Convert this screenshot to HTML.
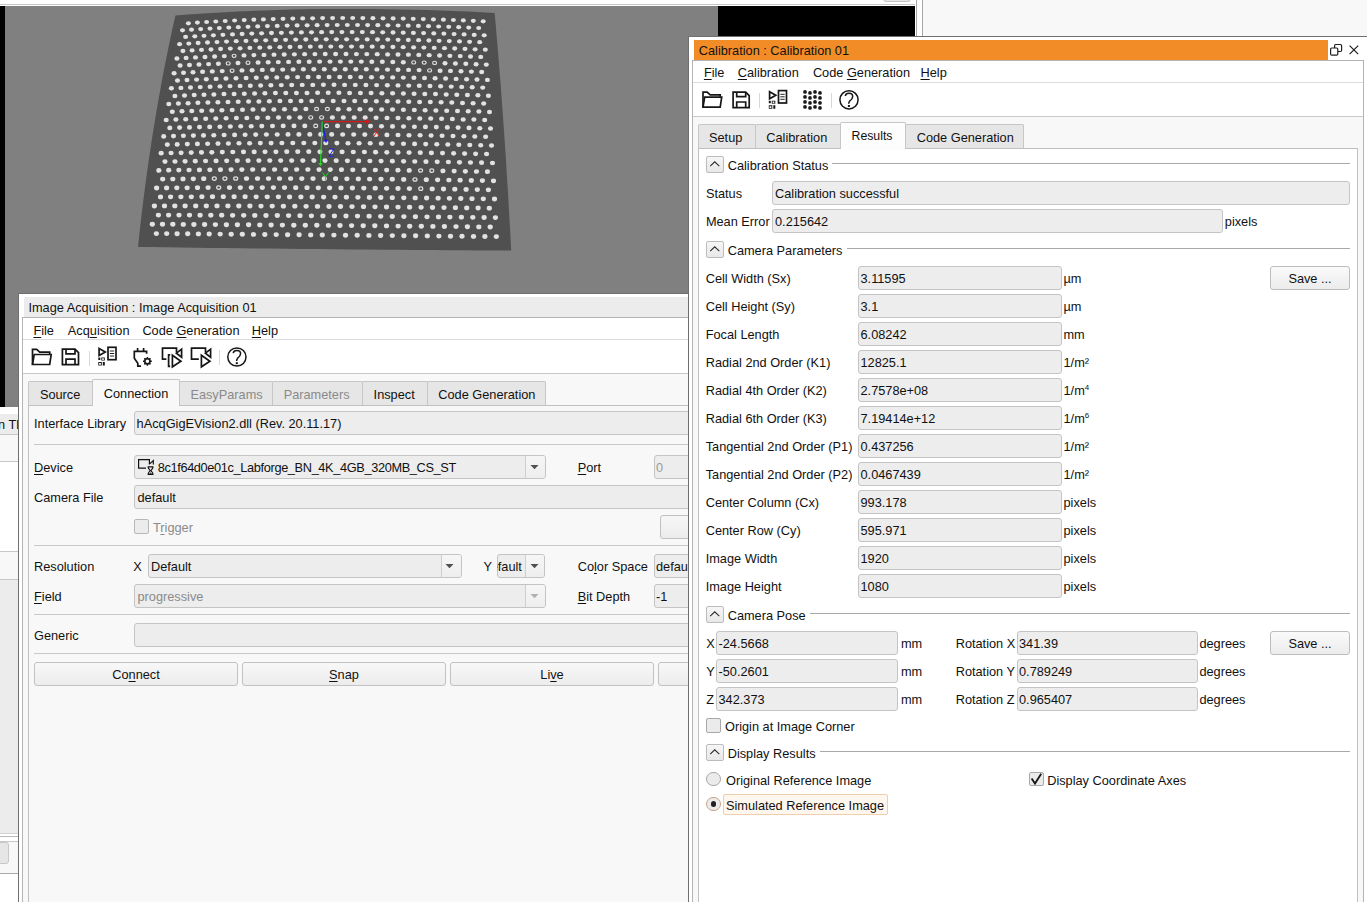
<!DOCTYPE html>
<html><head><meta charset="utf-8"><title>HDevelop Calibration</title>
<style>
html,body{margin:0;padding:0;}
body{width:1367px;height:902px;overflow:hidden;position:relative;background:#fff;font-family:"Liberation Sans",sans-serif;color:#111;}
.t{position:absolute;white-space:pre;line-height:15px;font-family:"Liberation Sans",sans-serif;}
u{text-decoration:underline;text-underline-offset:1.5px;}
sup{font-size:8px;vertical-align:5px;line-height:0;}
</style></head><body>
<div style="position:absolute;left:0px;top:4px;width:916px;height:1px;background:#c4c4c4"></div><div style="position:absolute;left:883px;top:-6px;width:28px;height:8px;background:#e6e6e6;border:1px solid #c4c4c4;border-radius:3px;box-sizing:border-box"></div><div style="position:absolute;left:0px;top:6px;width:916px;height:401px;background:#808080"></div><div style="position:absolute;left:0px;top:6px;width:5px;height:401px;background:#000"></div><div style="position:absolute;left:718px;top:6px;width:197px;height:30px;background:#000"></div><div style="position:absolute;left:915px;top:0px;width:7px;height:36px;background:#fff"></div><div style="position:absolute;left:916px;top:0px;width:1px;height:37px;background:#a8a8a8"></div><div style="position:absolute;left:922px;top:0px;width:1px;height:37px;background:#a8a8a8"></div><div style="position:absolute;left:923px;top:0px;width:444px;height:36px;background:#f8f8f8"></div><div style="position:absolute;left:916px;top:36px;width:451px;height:1px;background:#7a7a7a"></div><svg style="position:absolute;left:0;top:0" width="916" height="407" viewBox="0 0 916 407"><path d="M175.4,15.6 L187.5,14.6 L199.8,13.7 L212.3,12.9 L225.0,12.2 L237.8,11.5 L250.8,10.9 L263.9,10.4 L277.2,10.0 L290.5,9.6 L304.0,9.3 L317.5,9.1 L331.1,9.0 L344.7,8.9 L358.4,9.0 L372.1,9.0 L385.9,9.2 L399.6,9.4 L413.3,9.7 L427.0,10.1 L440.6,10.5 L454.2,11.0 L467.8,11.6 L481.2,12.2 L494.6,12.9 L495.4,21.0 L496.1,29.3 L496.8,37.8 L497.6,46.4 L498.3,55.2 L499.0,64.1 L499.7,73.2 L500.5,82.5 L501.2,91.9 L501.9,101.4 L502.6,111.2 L503.3,121.0 L504.0,131.1 L504.7,141.2 L505.4,151.6 L506.1,162.0 L506.7,172.6 L507.4,183.4 L508.1,194.3 L508.7,205.3 L509.3,216.4 L510.0,227.7 L510.6,239.1 L511.2,250.6 L495.6,250.5 L479.8,250.4 L464.0,250.3 L448.1,250.2 L432.0,250.1 L416.0,249.9 L399.9,249.8 L383.7,249.7 L367.6,249.5 L351.5,249.4 L335.4,249.2 L319.3,249.1 L303.3,248.9 L287.5,248.8 L271.7,248.6 L256.0,248.4 L240.5,248.2 L225.2,248.1 L210.1,247.9 L195.2,247.7 L180.5,247.5 L166.0,247.3 L151.9,247.1 L138.0,246.9 L139.2,235.7 L140.4,224.7 L141.7,213.7 L143.0,202.9 L144.4,192.1 L145.8,181.6 L147.2,171.1 L148.7,160.8 L150.2,150.6 L151.7,140.5 L153.3,130.6 L154.9,120.8 L156.5,111.2 L158.1,101.8 L159.8,92.5 L161.4,83.3 L163.1,74.3 L164.8,65.4 L166.6,56.7 L168.3,48.2 L170.1,39.8 L171.8,31.6 L173.6,23.5 Z" fill="#505050"/><g fill="#e2e2e2"><ellipse cx="188.4" cy="23.3" rx="2.50" ry="2.10"/><ellipse cx="197.4" cy="22.6" rx="2.50" ry="2.10"/><ellipse cx="206.6" cy="22.0" rx="2.50" ry="2.10"/><ellipse cx="215.8" cy="21.5" rx="2.50" ry="2.10"/><ellipse cx="225.2" cy="21.0" rx="2.50" ry="2.10"/><ellipse cx="234.6" cy="20.5" rx="2.50" ry="2.10"/><ellipse cx="244.2" cy="20.1" rx="2.50" ry="2.10"/><ellipse cx="253.8" cy="19.7" rx="2.50" ry="2.10"/><ellipse cx="263.4" cy="19.4" rx="2.50" ry="2.10"/><ellipse cx="273.2" cy="19.1" rx="2.50" ry="2.10"/><ellipse cx="283.0" cy="18.8" rx="2.50" ry="2.10"/><ellipse cx="292.8" cy="18.6" rx="2.50" ry="2.10"/><ellipse cx="302.7" cy="18.4" rx="2.50" ry="2.10"/><ellipse cx="312.6" cy="18.3" rx="2.50" ry="2.10"/><ellipse cx="322.6" cy="18.1" rx="2.50" ry="2.10"/><ellipse cx="332.6" cy="18.1" rx="2.50" ry="2.10"/><ellipse cx="342.7" cy="18.0" rx="2.50" ry="2.10"/><ellipse cx="352.7" cy="18.0" rx="2.50" ry="2.10"/><ellipse cx="362.8" cy="18.1" rx="2.50" ry="2.10"/><ellipse cx="372.9" cy="18.2" rx="2.50" ry="2.10"/><ellipse cx="383.0" cy="18.3" rx="2.50" ry="2.10"/><ellipse cx="393.1" cy="18.4" rx="2.50" ry="2.10"/><ellipse cx="403.2" cy="18.6" rx="2.50" ry="2.10"/><ellipse cx="413.2" cy="18.8" rx="2.50" ry="2.10"/><ellipse cx="423.3" cy="19.1" rx="2.50" ry="2.10"/><ellipse cx="433.4" cy="19.4" rx="2.50" ry="2.10"/><ellipse cx="443.4" cy="19.7" rx="2.50" ry="2.10"/><ellipse cx="453.4" cy="20.0" rx="2.50" ry="2.10"/><ellipse cx="463.3" cy="20.4" rx="2.50" ry="2.10"/><ellipse cx="473.3" cy="20.8" rx="2.50" ry="2.10"/><ellipse cx="483.2" cy="21.3" rx="2.50" ry="2.10"/><ellipse cx="182.5" cy="30.3" rx="2.50" ry="2.11"/><ellipse cx="191.5" cy="29.7" rx="2.50" ry="2.11"/><ellipse cx="200.7" cy="29.1" rx="2.50" ry="2.11"/><ellipse cx="210.0" cy="28.6" rx="2.50" ry="2.11"/><ellipse cx="219.3" cy="28.1" rx="2.50" ry="2.11"/><ellipse cx="228.8" cy="27.6" rx="2.50" ry="2.11"/><ellipse cx="238.3" cy="27.2" rx="2.50" ry="2.11"/><ellipse cx="248.0" cy="26.8" rx="2.50" ry="2.11"/><ellipse cx="257.7" cy="26.4" rx="2.50" ry="2.11"/><ellipse cx="267.4" cy="26.1" rx="2.50" ry="2.11"/><ellipse cx="277.2" cy="25.9" rx="2.50" ry="2.11"/><ellipse cx="287.1" cy="25.6" rx="2.50" ry="2.11"/><ellipse cx="297.1" cy="25.4" rx="2.50" ry="2.11"/><ellipse cx="307.1" cy="25.3" rx="2.50" ry="2.11"/><ellipse cx="317.1" cy="25.2" rx="2.50" ry="2.11"/><ellipse cx="327.1" cy="25.1" rx="2.50" ry="2.11"/><ellipse cx="337.2" cy="25.0" rx="2.50" ry="2.11"/><ellipse cx="347.3" cy="25.0" rx="2.50" ry="2.11"/><ellipse cx="357.5" cy="25.0" rx="2.50" ry="2.11"/><ellipse cx="367.6" cy="25.1" rx="2.50" ry="2.11"/><ellipse cx="377.8" cy="25.2" rx="2.50" ry="2.11"/><ellipse cx="387.9" cy="25.3" rx="2.50" ry="2.11"/><ellipse cx="398.1" cy="25.5" rx="2.50" ry="2.11"/><ellipse cx="408.2" cy="25.7" rx="2.50" ry="2.11"/><ellipse cx="418.4" cy="25.9" rx="2.50" ry="2.11"/><ellipse cx="428.5" cy="26.2" rx="2.50" ry="2.11"/><ellipse cx="438.6" cy="26.5" rx="2.50" ry="2.11"/><ellipse cx="448.7" cy="26.8" rx="2.50" ry="2.11"/><ellipse cx="458.7" cy="27.2" rx="2.50" ry="2.11"/><ellipse cx="468.7" cy="27.6" rx="2.50" ry="2.11"/><ellipse cx="478.7" cy="28.0" rx="2.50" ry="2.11"/><ellipse cx="185.6" cy="36.9" rx="2.51" ry="2.13"/><ellipse cx="194.8" cy="36.3" rx="2.51" ry="2.13"/><ellipse cx="204.0" cy="35.8" rx="2.51" ry="2.13"/><ellipse cx="213.4" cy="35.3" rx="2.51" ry="2.13"/><ellipse cx="222.9" cy="34.8" rx="2.51" ry="2.13"/><ellipse cx="232.5" cy="34.4" rx="2.51" ry="2.13"/><ellipse cx="242.1" cy="34.0" rx="2.51" ry="2.13"/><ellipse cx="251.8" cy="33.6" rx="2.51" ry="2.13"/><ellipse cx="261.6" cy="33.3" rx="2.51" ry="2.13"/><ellipse cx="271.5" cy="33.0" rx="2.51" ry="2.13"/><ellipse cx="281.4" cy="32.8" rx="2.51" ry="2.13"/><ellipse cx="291.4" cy="32.6" rx="2.51" ry="2.13"/><ellipse cx="301.4" cy="32.4" rx="2.51" ry="2.13"/><ellipse cx="311.5" cy="32.3" rx="2.51" ry="2.13"/><ellipse cx="321.6" cy="32.2" rx="2.51" ry="2.13"/><ellipse cx="331.7" cy="32.1" rx="2.51" ry="2.13"/><ellipse cx="341.9" cy="32.1" rx="2.51" ry="2.13"/><ellipse cx="352.1" cy="32.1" rx="2.51" ry="2.13"/><ellipse cx="362.3" cy="32.1" rx="2.51" ry="2.13"/><ellipse cx="372.5" cy="32.2" rx="2.51" ry="2.13"/><ellipse cx="382.7" cy="32.3" rx="2.51" ry="2.13"/><ellipse cx="393.0" cy="32.5" rx="2.51" ry="2.13"/><ellipse cx="403.2" cy="32.7" rx="2.51" ry="2.13"/><ellipse cx="413.4" cy="32.9" rx="2.51" ry="2.13"/><ellipse cx="423.6" cy="33.1" rx="2.51" ry="2.13"/><ellipse cx="433.8" cy="33.4" rx="2.51" ry="2.13"/><ellipse cx="443.9" cy="33.7" rx="2.51" ry="2.13"/><ellipse cx="454.1" cy="34.1" rx="2.51" ry="2.13"/><ellipse cx="464.1" cy="34.4" rx="2.51" ry="2.13"/><ellipse cx="474.2" cy="34.9" rx="2.51" ry="2.13"/><ellipse cx="484.2" cy="35.3" rx="2.51" ry="2.13"/><ellipse cx="179.6" cy="44.2" rx="2.51" ry="2.14"/><ellipse cx="188.8" cy="43.6" rx="2.51" ry="2.14"/><ellipse cx="198.1" cy="43.0" rx="2.51" ry="2.14"/><ellipse cx="207.5" cy="42.5" rx="2.51" ry="2.14"/><ellipse cx="217.0" cy="42.1" rx="2.51" ry="2.14"/><ellipse cx="226.5" cy="41.6" rx="2.51" ry="2.14"/><ellipse cx="236.2" cy="41.2" rx="2.51" ry="2.14"/><ellipse cx="246.0" cy="40.9" rx="2.51" ry="2.14"/><ellipse cx="255.8" cy="40.6" rx="2.51" ry="2.14"/><ellipse cx="265.7" cy="40.3" rx="2.51" ry="2.14"/><ellipse cx="275.6" cy="40.0" rx="2.51" ry="2.14"/><ellipse cx="285.6" cy="39.8" rx="2.51" ry="2.14"/><ellipse cx="295.7" cy="39.6" rx="2.51" ry="2.14"/><ellipse cx="305.8" cy="39.5" rx="2.51" ry="2.14"/><ellipse cx="316.0" cy="39.4" rx="2.51" ry="2.14"/><ellipse cx="326.2" cy="39.3" rx="2.51" ry="2.14"/><ellipse cx="336.4" cy="39.3" rx="2.51" ry="2.14"/><ellipse cx="346.6" cy="39.3" rx="2.51" ry="2.14"/><ellipse cx="356.9" cy="39.3" rx="2.51" ry="2.14"/><ellipse cx="367.2" cy="39.4" rx="2.51" ry="2.14"/><ellipse cx="377.5" cy="39.5" rx="2.51" ry="2.14"/><ellipse cx="387.8" cy="39.6" rx="2.51" ry="2.14"/><ellipse cx="398.1" cy="39.8" rx="2.51" ry="2.14"/><ellipse cx="408.3" cy="40.0" rx="2.51" ry="2.14"/><ellipse cx="418.6" cy="40.2" rx="2.51" ry="2.14"/><ellipse cx="428.9" cy="40.5" rx="2.51" ry="2.14"/><ellipse cx="439.1" cy="40.8" rx="2.51" ry="2.14"/><ellipse cx="449.3" cy="41.1" rx="2.51" ry="2.14"/><ellipse cx="459.5" cy="41.4" rx="2.51" ry="2.14"/><ellipse cx="469.6" cy="41.8" rx="2.51" ry="2.14"/><ellipse cx="479.7" cy="42.2" rx="2.51" ry="2.14"/><ellipse cx="182.9" cy="51.0" rx="2.52" ry="2.15"/><ellipse cx="192.1" cy="50.4" rx="2.52" ry="2.15"/><ellipse cx="201.5" cy="49.9" rx="2.52" ry="2.15"/><ellipse cx="211.0" cy="49.5" rx="2.52" ry="2.15"/><ellipse cx="220.6" cy="49.0" rx="2.52" ry="2.15"/><ellipse cx="230.3" cy="48.6" rx="2.52" ry="2.15"/><ellipse cx="240.1" cy="48.3" rx="2.52" ry="2.15"/><ellipse cx="249.9" cy="47.9" rx="2.52" ry="2.15"/><ellipse cx="259.8" cy="47.7" rx="2.52" ry="2.15"/><ellipse cx="269.8" cy="47.4" rx="2.52" ry="2.15"/><ellipse cx="279.9" cy="47.2" rx="2.52" ry="2.15"/><ellipse cx="290.0" cy="47.0" rx="2.52" ry="2.15"/><ellipse cx="300.1" cy="46.9" rx="2.52" ry="2.15"/><ellipse cx="310.3" cy="46.7" rx="2.52" ry="2.15"/><ellipse cx="320.6" cy="46.7" rx="2.52" ry="2.15"/><ellipse cx="330.8" cy="46.6" rx="2.52" ry="2.15"/><ellipse cx="341.1" cy="46.6" rx="2.52" ry="2.15"/><ellipse cx="351.5" cy="46.6" rx="2.52" ry="2.15"/><ellipse cx="361.8" cy="46.7" rx="2.52" ry="2.15"/><ellipse cx="372.2" cy="46.7" rx="2.52" ry="2.15"/><ellipse cx="382.5" cy="46.9" rx="2.52" ry="2.15"/><ellipse cx="392.9" cy="47.0" rx="2.52" ry="2.15"/><ellipse cx="403.2" cy="47.2" rx="2.52" ry="2.15"/><ellipse cx="413.6" cy="47.4" rx="2.52" ry="2.15"/><ellipse cx="423.9" cy="47.6" rx="2.52" ry="2.15"/><ellipse cx="434.2" cy="47.9" rx="2.52" ry="2.15"/><ellipse cx="444.5" cy="48.2" rx="2.52" ry="2.15"/><ellipse cx="454.7" cy="48.5" rx="2.52" ry="2.15"/><ellipse cx="465.0" cy="48.9" rx="2.52" ry="2.15"/><ellipse cx="475.1" cy="49.3" rx="2.52" ry="2.15"/><ellipse cx="485.3" cy="49.7" rx="2.52" ry="2.15"/><ellipse cx="176.9" cy="58.5" rx="2.52" ry="2.17"/><ellipse cx="186.1" cy="57.9" rx="2.52" ry="2.17"/><ellipse cx="195.5" cy="57.4" rx="2.52" ry="2.17"/><ellipse cx="205.0" cy="57.0" rx="2.52" ry="2.17"/><ellipse cx="214.6" cy="56.5" rx="2.52" ry="2.17"/><ellipse cx="224.3" cy="56.1" rx="2.52" ry="2.17"/><ellipse cx="234.1" cy="55.8" rx="2.52" ry="2.17"/><ellipse cx="244.0" cy="55.4" rx="2.52" ry="2.17"/><ellipse cx="253.9" cy="55.1" rx="2.52" ry="2.17"/><ellipse cx="264.0" cy="54.9" rx="2.52" ry="2.17"/><ellipse cx="274.0" cy="54.7" rx="2.52" ry="2.17"/><ellipse cx="284.2" cy="54.5" rx="2.52" ry="2.17"/><ellipse cx="294.4" cy="54.3" rx="2.52" ry="2.17"/><ellipse cx="304.6" cy="54.2" rx="2.52" ry="2.17"/><ellipse cx="314.9" cy="54.1" rx="2.52" ry="2.17"/><ellipse cx="325.2" cy="54.0" rx="2.52" ry="2.17"/><ellipse cx="335.6" cy="54.0" rx="2.52" ry="2.17"/><ellipse cx="346.0" cy="54.0" rx="2.52" ry="2.17"/><ellipse cx="356.4" cy="54.1" rx="2.52" ry="2.17"/><ellipse cx="366.8" cy="54.1" rx="2.52" ry="2.17"/><ellipse cx="377.2" cy="54.2" rx="2.52" ry="2.17"/><ellipse cx="387.6" cy="54.4" rx="2.52" ry="2.17"/><ellipse cx="398.0" cy="54.5" rx="2.52" ry="2.17"/><ellipse cx="408.4" cy="54.7" rx="2.52" ry="2.17"/><ellipse cx="418.8" cy="54.9" rx="2.52" ry="2.17"/><ellipse cx="429.2" cy="55.2" rx="2.52" ry="2.17"/><ellipse cx="439.6" cy="55.5" rx="2.52" ry="2.17"/><ellipse cx="449.9" cy="55.8" rx="2.52" ry="2.17"/><ellipse cx="460.2" cy="56.1" rx="2.52" ry="2.17"/><ellipse cx="470.5" cy="56.5" rx="2.52" ry="2.17"/><ellipse cx="480.7" cy="56.9" rx="2.52" ry="2.17"/><ellipse cx="180.1" cy="65.5" rx="2.52" ry="2.18"/><ellipse cx="189.5" cy="65.0" rx="2.52" ry="2.18"/><ellipse cx="199.0" cy="64.5" rx="2.52" ry="2.18"/><ellipse cx="208.6" cy="64.1" rx="2.52" ry="2.18"/><ellipse cx="218.4" cy="63.7" rx="2.52" ry="2.18"/><ellipse cx="228.2" cy="63.4" rx="2.52" ry="2.18"/><ellipse cx="238.0" cy="63.0" rx="2.52" ry="2.18"/><ellipse cx="248.0" cy="62.7" rx="2.52" ry="2.18"/><ellipse cx="258.1" cy="62.5" rx="2.52" ry="2.18"/><ellipse cx="268.2" cy="62.3" rx="2.52" ry="2.18"/><ellipse cx="278.3" cy="62.1" rx="2.52" ry="2.18"/><ellipse cx="288.6" cy="61.9" rx="2.52" ry="2.18"/><ellipse cx="298.9" cy="61.8" rx="2.52" ry="2.18"/><ellipse cx="309.2" cy="61.7" rx="2.52" ry="2.18"/><ellipse cx="319.6" cy="61.6" rx="2.52" ry="2.18"/><ellipse cx="330.0" cy="61.6" rx="2.52" ry="2.18"/><ellipse cx="340.4" cy="61.6" rx="2.52" ry="2.18"/><ellipse cx="350.8" cy="61.6" rx="2.52" ry="2.18"/><ellipse cx="361.3" cy="61.6" rx="2.52" ry="2.18"/><ellipse cx="371.8" cy="61.7" rx="2.52" ry="2.18"/><ellipse cx="382.3" cy="61.8" rx="2.52" ry="2.18"/><ellipse cx="392.8" cy="62.0" rx="2.52" ry="2.18"/><ellipse cx="403.3" cy="62.2" rx="2.52" ry="2.18"/><ellipse cx="413.7" cy="62.4" rx="2.52" ry="2.18"/><ellipse cx="424.2" cy="62.6" rx="2.52" ry="2.18"/><ellipse cx="434.6" cy="62.9" rx="2.52" ry="2.18"/><ellipse cx="445.0" cy="63.2" rx="2.52" ry="2.18"/><ellipse cx="455.4" cy="63.5" rx="2.52" ry="2.18"/><ellipse cx="465.8" cy="63.8" rx="2.52" ry="2.18"/><ellipse cx="476.1" cy="64.2" rx="2.52" ry="2.18"/><ellipse cx="486.3" cy="64.6" rx="2.52" ry="2.18"/><ellipse cx="174.1" cy="73.2" rx="2.53" ry="2.19"/><ellipse cx="183.5" cy="72.7" rx="2.53" ry="2.19"/><ellipse cx="193.0" cy="72.2" rx="2.53" ry="2.19"/><ellipse cx="202.6" cy="71.8" rx="2.53" ry="2.19"/><ellipse cx="212.3" cy="71.4" rx="2.53" ry="2.19"/><ellipse cx="222.2" cy="71.1" rx="2.53" ry="2.19"/><ellipse cx="232.1" cy="70.7" rx="2.53" ry="2.19"/><ellipse cx="242.0" cy="70.4" rx="2.53" ry="2.19"/><ellipse cx="252.1" cy="70.2" rx="2.53" ry="2.19"/><ellipse cx="262.3" cy="69.9" rx="2.53" ry="2.19"/><ellipse cx="272.5" cy="69.7" rx="2.53" ry="2.19"/><ellipse cx="282.7" cy="69.6" rx="2.53" ry="2.19"/><ellipse cx="293.1" cy="69.4" rx="2.53" ry="2.19"/><ellipse cx="303.4" cy="69.3" rx="2.53" ry="2.19"/><ellipse cx="313.8" cy="69.3" rx="2.53" ry="2.19"/><ellipse cx="324.3" cy="69.2" rx="2.53" ry="2.19"/><ellipse cx="334.8" cy="69.2" rx="2.53" ry="2.19"/><ellipse cx="345.3" cy="69.2" rx="2.53" ry="2.19"/><ellipse cx="355.8" cy="69.3" rx="2.53" ry="2.19"/><ellipse cx="366.3" cy="69.3" rx="2.53" ry="2.19"/><ellipse cx="376.9" cy="69.4" rx="2.53" ry="2.19"/><ellipse cx="387.5" cy="69.6" rx="2.53" ry="2.19"/><ellipse cx="398.0" cy="69.7" rx="2.53" ry="2.19"/><ellipse cx="408.6" cy="69.9" rx="2.53" ry="2.19"/><ellipse cx="419.1" cy="70.1" rx="2.53" ry="2.19"/><ellipse cx="429.6" cy="70.4" rx="2.53" ry="2.19"/><ellipse cx="440.1" cy="70.7" rx="2.53" ry="2.19"/><ellipse cx="450.5" cy="70.9" rx="2.53" ry="2.19"/><ellipse cx="461.0" cy="71.3" rx="2.53" ry="2.19"/><ellipse cx="471.4" cy="71.6" rx="2.53" ry="2.19"/><ellipse cx="481.7" cy="72.0" rx="2.53" ry="2.19"/><ellipse cx="177.5" cy="80.5" rx="2.53" ry="2.21"/><ellipse cx="187.0" cy="80.0" rx="2.53" ry="2.21"/><ellipse cx="196.6" cy="79.6" rx="2.53" ry="2.21"/><ellipse cx="206.3" cy="79.2" rx="2.53" ry="2.21"/><ellipse cx="216.1" cy="78.9" rx="2.53" ry="2.21"/><ellipse cx="226.0" cy="78.5" rx="2.53" ry="2.21"/><ellipse cx="236.0" cy="78.2" rx="2.53" ry="2.21"/><ellipse cx="246.1" cy="78.0" rx="2.53" ry="2.21"/><ellipse cx="256.3" cy="77.7" rx="2.53" ry="2.21"/><ellipse cx="266.5" cy="77.5" rx="2.53" ry="2.21"/><ellipse cx="276.8" cy="77.4" rx="2.53" ry="2.21"/><ellipse cx="287.2" cy="77.2" rx="2.53" ry="2.21"/><ellipse cx="297.6" cy="77.1" rx="2.53" ry="2.21"/><ellipse cx="308.1" cy="77.0" rx="2.53" ry="2.21"/><ellipse cx="318.6" cy="77.0" rx="2.53" ry="2.21"/><ellipse cx="329.1" cy="77.0" rx="2.53" ry="2.21"/><ellipse cx="339.7" cy="77.0" rx="2.53" ry="2.21"/><ellipse cx="350.2" cy="77.0" rx="2.53" ry="2.21"/><ellipse cx="360.8" cy="77.1" rx="2.53" ry="2.21"/><ellipse cx="371.5" cy="77.2" rx="2.53" ry="2.21"/><ellipse cx="382.1" cy="77.3" rx="2.53" ry="2.21"/><ellipse cx="392.7" cy="77.4" rx="2.53" ry="2.21"/><ellipse cx="403.3" cy="77.6" rx="2.53" ry="2.21"/><ellipse cx="413.9" cy="77.8" rx="2.53" ry="2.21"/><ellipse cx="424.5" cy="78.0" rx="2.53" ry="2.21"/><ellipse cx="435.1" cy="78.3" rx="2.53" ry="2.21"/><ellipse cx="445.6" cy="78.5" rx="2.53" ry="2.21"/><ellipse cx="456.1" cy="78.9" rx="2.53" ry="2.21"/><ellipse cx="466.6" cy="79.2" rx="2.53" ry="2.21"/><ellipse cx="477.0" cy="79.5" rx="2.53" ry="2.21"/><ellipse cx="487.4" cy="79.9" rx="2.53" ry="2.21"/><ellipse cx="171.4" cy="88.3" rx="2.53" ry="2.22"/><ellipse cx="180.9" cy="87.9" rx="2.53" ry="2.22"/><ellipse cx="190.5" cy="87.5" rx="2.53" ry="2.22"/><ellipse cx="200.2" cy="87.1" rx="2.53" ry="2.22"/><ellipse cx="210.1" cy="86.8" rx="2.53" ry="2.22"/><ellipse cx="220.0" cy="86.4" rx="2.53" ry="2.22"/><ellipse cx="230.0" cy="86.1" rx="2.53" ry="2.22"/><ellipse cx="240.1" cy="85.9" rx="2.53" ry="2.22"/><ellipse cx="250.3" cy="85.7" rx="2.53" ry="2.22"/><ellipse cx="260.6" cy="85.5" rx="2.53" ry="2.22"/><ellipse cx="270.9" cy="85.3" rx="2.53" ry="2.22"/><ellipse cx="281.3" cy="85.1" rx="2.53" ry="2.22"/><ellipse cx="291.7" cy="85.0" rx="2.53" ry="2.22"/><ellipse cx="302.2" cy="84.9" rx="2.53" ry="2.22"/><ellipse cx="312.8" cy="84.9" rx="2.53" ry="2.22"/><ellipse cx="323.4" cy="84.8" rx="2.53" ry="2.22"/><ellipse cx="334.0" cy="84.8" rx="2.53" ry="2.22"/><ellipse cx="344.6" cy="84.9" rx="2.53" ry="2.22"/><ellipse cx="355.3" cy="84.9" rx="2.53" ry="2.22"/><ellipse cx="365.9" cy="85.0" rx="2.53" ry="2.22"/><ellipse cx="376.6" cy="85.1" rx="2.53" ry="2.22"/><ellipse cx="387.3" cy="85.2" rx="2.53" ry="2.22"/><ellipse cx="398.0" cy="85.4" rx="2.53" ry="2.22"/><ellipse cx="408.7" cy="85.6" rx="2.53" ry="2.22"/><ellipse cx="419.3" cy="85.8" rx="2.53" ry="2.22"/><ellipse cx="430.0" cy="86.0" rx="2.53" ry="2.22"/><ellipse cx="440.6" cy="86.3" rx="2.53" ry="2.22"/><ellipse cx="451.2" cy="86.6" rx="2.53" ry="2.22"/><ellipse cx="461.7" cy="86.9" rx="2.53" ry="2.22"/><ellipse cx="472.2" cy="87.2" rx="2.53" ry="2.22"/><ellipse cx="482.7" cy="87.6" rx="2.53" ry="2.22"/><ellipse cx="174.9" cy="95.9" rx="2.54" ry="2.23"/><ellipse cx="184.5" cy="95.5" rx="2.54" ry="2.23"/><ellipse cx="194.2" cy="95.1" rx="2.54" ry="2.23"/><ellipse cx="204.0" cy="94.7" rx="2.54" ry="2.23"/><ellipse cx="213.9" cy="94.4" rx="2.54" ry="2.23"/><ellipse cx="224.0" cy="94.1" rx="2.54" ry="2.23"/><ellipse cx="234.1" cy="93.9" rx="2.54" ry="2.23"/><ellipse cx="244.3" cy="93.7" rx="2.54" ry="2.23"/><ellipse cx="254.6" cy="93.5" rx="2.54" ry="2.23"/><ellipse cx="264.9" cy="93.3" rx="2.54" ry="2.23"/><ellipse cx="275.4" cy="93.1" rx="2.54" ry="2.23"/><ellipse cx="285.8" cy="93.0" rx="2.54" ry="2.23"/><ellipse cx="296.4" cy="92.9" rx="2.54" ry="2.23"/><ellipse cx="307.0" cy="92.9" rx="2.54" ry="2.23"/><ellipse cx="317.6" cy="92.8" rx="2.54" ry="2.23"/><ellipse cx="328.2" cy="92.8" rx="2.54" ry="2.23"/><ellipse cx="338.9" cy="92.8" rx="2.54" ry="2.23"/><ellipse cx="349.6" cy="92.9" rx="2.54" ry="2.23"/><ellipse cx="360.4" cy="92.9" rx="2.54" ry="2.23"/><ellipse cx="371.1" cy="93.0" rx="2.54" ry="2.23"/><ellipse cx="381.9" cy="93.2" rx="2.54" ry="2.23"/><ellipse cx="392.6" cy="93.3" rx="2.54" ry="2.23"/><ellipse cx="403.4" cy="93.5" rx="2.54" ry="2.23"/><ellipse cx="414.1" cy="93.7" rx="2.54" ry="2.23"/><ellipse cx="424.8" cy="93.9" rx="2.54" ry="2.23"/><ellipse cx="435.5" cy="94.1" rx="2.54" ry="2.23"/><ellipse cx="446.2" cy="94.4" rx="2.54" ry="2.23"/><ellipse cx="456.8" cy="94.7" rx="2.54" ry="2.23"/><ellipse cx="467.4" cy="95.0" rx="2.54" ry="2.23"/><ellipse cx="477.9" cy="95.3" rx="2.54" ry="2.23"/><ellipse cx="488.4" cy="95.7" rx="2.54" ry="2.23"/><ellipse cx="168.8" cy="103.9" rx="2.54" ry="2.25"/><ellipse cx="178.4" cy="103.5" rx="2.54" ry="2.25"/><ellipse cx="188.1" cy="103.2" rx="2.54" ry="2.25"/><ellipse cx="197.9" cy="102.8" rx="2.54" ry="2.25"/><ellipse cx="207.9" cy="102.5" rx="2.54" ry="2.25"/><ellipse cx="217.9" cy="102.3" rx="2.54" ry="2.25"/><ellipse cx="228.0" cy="102.0" rx="2.54" ry="2.25"/><ellipse cx="238.2" cy="101.8" rx="2.54" ry="2.25"/><ellipse cx="248.6" cy="101.6" rx="2.54" ry="2.25"/><ellipse cx="258.9" cy="101.4" rx="2.54" ry="2.25"/><ellipse cx="269.4" cy="101.3" rx="2.54" ry="2.25"/><ellipse cx="279.9" cy="101.1" rx="2.54" ry="2.25"/><ellipse cx="290.5" cy="101.0" rx="2.54" ry="2.25"/><ellipse cx="301.1" cy="101.0" rx="2.54" ry="2.25"/><ellipse cx="311.8" cy="100.9" rx="2.54" ry="2.25"/><ellipse cx="322.5" cy="100.9" rx="2.54" ry="2.25"/><ellipse cx="333.2" cy="100.9" rx="2.54" ry="2.25"/><ellipse cx="344.0" cy="101.0" rx="2.54" ry="2.25"/><ellipse cx="354.7" cy="101.0" rx="2.54" ry="2.25"/><ellipse cx="365.5" cy="101.1" rx="2.54" ry="2.25"/><ellipse cx="376.4" cy="101.2" rx="2.54" ry="2.25"/><ellipse cx="387.2" cy="101.3" rx="2.54" ry="2.25"/><ellipse cx="398.0" cy="101.5" rx="2.54" ry="2.25"/><ellipse cx="408.8" cy="101.7" rx="2.54" ry="2.25"/><ellipse cx="419.6" cy="101.9" rx="2.54" ry="2.25"/><ellipse cx="430.3" cy="102.1" rx="2.54" ry="2.25"/><ellipse cx="441.1" cy="102.3" rx="2.54" ry="2.25"/><ellipse cx="451.8" cy="102.6" rx="2.54" ry="2.25"/><ellipse cx="462.5" cy="102.9" rx="2.54" ry="2.25"/><ellipse cx="473.1" cy="103.2" rx="2.54" ry="2.25"/><ellipse cx="483.7" cy="103.5" rx="2.54" ry="2.25"/><ellipse cx="172.3" cy="111.7" rx="2.55" ry="2.26"/><ellipse cx="182.0" cy="111.3" rx="2.55" ry="2.26"/><ellipse cx="191.8" cy="111.0" rx="2.55" ry="2.26"/><ellipse cx="201.7" cy="110.7" rx="2.55" ry="2.26"/><ellipse cx="211.8" cy="110.4" rx="2.55" ry="2.26"/><ellipse cx="221.9" cy="110.2" rx="2.55" ry="2.26"/><ellipse cx="232.2" cy="110.0" rx="2.55" ry="2.26"/><ellipse cx="242.5" cy="109.8" rx="2.55" ry="2.26"/><ellipse cx="252.9" cy="109.6" rx="2.55" ry="2.26"/><ellipse cx="263.4" cy="109.5" rx="2.55" ry="2.26"/><ellipse cx="273.9" cy="109.4" rx="2.55" ry="2.26"/><ellipse cx="284.5" cy="109.3" rx="2.55" ry="2.26"/><ellipse cx="295.2" cy="109.2" rx="2.55" ry="2.26"/><ellipse cx="305.9" cy="109.1" rx="2.55" ry="2.26"/><ellipse cx="316.6" cy="109.1" rx="2.55" ry="2.26"/><ellipse cx="327.4" cy="109.1" rx="2.55" ry="2.26"/><ellipse cx="338.2" cy="109.2" rx="2.55" ry="2.26"/><ellipse cx="349.1" cy="109.2" rx="2.55" ry="2.26"/><ellipse cx="359.9" cy="109.3" rx="2.55" ry="2.26"/><ellipse cx="370.8" cy="109.4" rx="2.55" ry="2.26"/><ellipse cx="381.7" cy="109.5" rx="2.55" ry="2.26"/><ellipse cx="392.5" cy="109.6" rx="2.55" ry="2.26"/><ellipse cx="403.4" cy="109.8" rx="2.55" ry="2.26"/><ellipse cx="414.3" cy="110.0" rx="2.55" ry="2.26"/><ellipse cx="425.1" cy="110.2" rx="2.55" ry="2.26"/><ellipse cx="435.9" cy="110.4" rx="2.55" ry="2.26"/><ellipse cx="446.7" cy="110.7" rx="2.55" ry="2.26"/><ellipse cx="457.5" cy="110.9" rx="2.55" ry="2.26"/><ellipse cx="468.2" cy="111.2" rx="2.55" ry="2.26"/><ellipse cx="478.9" cy="111.5" rx="2.55" ry="2.26"/><ellipse cx="489.5" cy="111.9" rx="2.55" ry="2.26"/><ellipse cx="166.2" cy="119.9" rx="2.55" ry="2.27"/><ellipse cx="175.9" cy="119.6" rx="2.55" ry="2.27"/><ellipse cx="185.7" cy="119.3" rx="2.55" ry="2.27"/><ellipse cx="195.6" cy="119.0" rx="2.55" ry="2.27"/><ellipse cx="205.7" cy="118.7" rx="2.55" ry="2.27"/><ellipse cx="215.8" cy="118.5" rx="2.55" ry="2.27"/><ellipse cx="226.1" cy="118.3" rx="2.55" ry="2.27"/><ellipse cx="236.4" cy="118.1" rx="2.55" ry="2.27"/><ellipse cx="246.8" cy="117.9" rx="2.55" ry="2.27"/><ellipse cx="257.3" cy="117.8" rx="2.55" ry="2.27"/><ellipse cx="267.9" cy="117.7" rx="2.55" ry="2.27"/><ellipse cx="278.5" cy="117.6" rx="2.55" ry="2.27"/><ellipse cx="289.2" cy="117.5" rx="2.55" ry="2.27"/><ellipse cx="300.0" cy="117.5" rx="2.55" ry="2.27"/><ellipse cx="310.7" cy="117.4" rx="2.55" ry="2.27"/><ellipse cx="321.6" cy="117.4" rx="2.55" ry="2.27"/><ellipse cx="332.4" cy="117.5" rx="2.55" ry="2.27"/><ellipse cx="343.3" cy="117.5" rx="2.55" ry="2.27"/><ellipse cx="354.2" cy="117.6" rx="2.55" ry="2.27"/><ellipse cx="365.2" cy="117.6" rx="2.55" ry="2.27"/><ellipse cx="376.1" cy="117.8" rx="2.55" ry="2.27"/><ellipse cx="387.0" cy="117.9" rx="2.55" ry="2.27"/><ellipse cx="398.0" cy="118.0" rx="2.55" ry="2.27"/><ellipse cx="408.9" cy="118.2" rx="2.55" ry="2.27"/><ellipse cx="419.8" cy="118.4" rx="2.55" ry="2.27"/><ellipse cx="430.7" cy="118.6" rx="2.55" ry="2.27"/><ellipse cx="441.6" cy="118.8" rx="2.55" ry="2.27"/><ellipse cx="452.4" cy="119.1" rx="2.55" ry="2.27"/><ellipse cx="463.2" cy="119.4" rx="2.55" ry="2.27"/><ellipse cx="473.9" cy="119.6" rx="2.55" ry="2.27"/><ellipse cx="484.7" cy="120.0" rx="2.55" ry="2.27"/><ellipse cx="169.8" cy="127.9" rx="2.55" ry="2.29"/><ellipse cx="179.6" cy="127.6" rx="2.55" ry="2.29"/><ellipse cx="189.5" cy="127.4" rx="2.55" ry="2.29"/><ellipse cx="199.5" cy="127.1" rx="2.55" ry="2.29"/><ellipse cx="209.7" cy="126.9" rx="2.55" ry="2.29"/><ellipse cx="219.9" cy="126.7" rx="2.55" ry="2.29"/><ellipse cx="230.3" cy="126.5" rx="2.55" ry="2.29"/><ellipse cx="240.7" cy="126.3" rx="2.55" ry="2.29"/><ellipse cx="251.2" cy="126.2" rx="2.55" ry="2.29"/><ellipse cx="261.8" cy="126.1" rx="2.55" ry="2.29"/><ellipse cx="272.5" cy="126.0" rx="2.55" ry="2.29"/><ellipse cx="283.2" cy="125.9" rx="2.55" ry="2.29"/><ellipse cx="294.0" cy="125.9" rx="2.55" ry="2.29"/><ellipse cx="304.8" cy="125.9" rx="2.55" ry="2.29"/><ellipse cx="315.7" cy="125.9" rx="2.55" ry="2.29"/><ellipse cx="326.6" cy="125.9" rx="2.55" ry="2.29"/><ellipse cx="337.5" cy="125.9" rx="2.55" ry="2.29"/><ellipse cx="348.5" cy="126.0" rx="2.55" ry="2.29"/><ellipse cx="359.5" cy="126.0" rx="2.55" ry="2.29"/><ellipse cx="370.5" cy="126.1" rx="2.55" ry="2.29"/><ellipse cx="381.5" cy="126.3" rx="2.55" ry="2.29"/><ellipse cx="392.5" cy="126.4" rx="2.55" ry="2.29"/><ellipse cx="403.5" cy="126.5" rx="2.55" ry="2.29"/><ellipse cx="414.4" cy="126.7" rx="2.55" ry="2.29"/><ellipse cx="425.4" cy="126.9" rx="2.55" ry="2.29"/><ellipse cx="436.3" cy="127.1" rx="2.55" ry="2.29"/><ellipse cx="447.3" cy="127.4" rx="2.55" ry="2.29"/><ellipse cx="458.1" cy="127.6" rx="2.55" ry="2.29"/><ellipse cx="469.0" cy="127.9" rx="2.55" ry="2.29"/><ellipse cx="479.8" cy="128.2" rx="2.55" ry="2.29"/><ellipse cx="490.5" cy="128.5" rx="2.55" ry="2.29"/><ellipse cx="163.7" cy="136.4" rx="2.56" ry="2.30"/><ellipse cx="173.5" cy="136.1" rx="2.56" ry="2.30"/><ellipse cx="183.4" cy="135.8" rx="2.56" ry="2.30"/><ellipse cx="193.4" cy="135.6" rx="2.56" ry="2.30"/><ellipse cx="203.5" cy="135.4" rx="2.56" ry="2.30"/><ellipse cx="213.8" cy="135.2" rx="2.56" ry="2.30"/><ellipse cx="224.1" cy="135.0" rx="2.56" ry="2.30"/><ellipse cx="234.6" cy="134.9" rx="2.56" ry="2.30"/><ellipse cx="245.1" cy="134.7" rx="2.56" ry="2.30"/><ellipse cx="255.7" cy="134.6" rx="2.56" ry="2.30"/><ellipse cx="266.4" cy="134.5" rx="2.56" ry="2.30"/><ellipse cx="277.2" cy="134.5" rx="2.56" ry="2.30"/><ellipse cx="288.0" cy="134.4" rx="2.56" ry="2.30"/><ellipse cx="298.9" cy="134.4" rx="2.56" ry="2.30"/><ellipse cx="309.8" cy="134.4" rx="2.56" ry="2.30"/><ellipse cx="320.7" cy="134.4" rx="2.56" ry="2.30"/><ellipse cx="331.7" cy="134.4" rx="2.56" ry="2.30"/><ellipse cx="342.7" cy="134.5" rx="2.56" ry="2.30"/><ellipse cx="353.7" cy="134.5" rx="2.56" ry="2.30"/><ellipse cx="364.8" cy="134.6" rx="2.56" ry="2.30"/><ellipse cx="375.9" cy="134.7" rx="2.56" ry="2.30"/><ellipse cx="386.9" cy="134.9" rx="2.56" ry="2.30"/><ellipse cx="398.0" cy="135.0" rx="2.56" ry="2.30"/><ellipse cx="409.0" cy="135.2" rx="2.56" ry="2.30"/><ellipse cx="420.1" cy="135.3" rx="2.56" ry="2.30"/><ellipse cx="431.1" cy="135.5" rx="2.56" ry="2.30"/><ellipse cx="442.1" cy="135.8" rx="2.56" ry="2.30"/><ellipse cx="453.0" cy="136.0" rx="2.56" ry="2.30"/><ellipse cx="463.9" cy="136.2" rx="2.56" ry="2.30"/><ellipse cx="474.8" cy="136.5" rx="2.56" ry="2.30"/><ellipse cx="485.6" cy="136.8" rx="2.56" ry="2.30"/><ellipse cx="167.3" cy="144.6" rx="2.56" ry="2.32"/><ellipse cx="177.2" cy="144.4" rx="2.56" ry="2.32"/><ellipse cx="187.3" cy="144.1" rx="2.56" ry="2.32"/><ellipse cx="197.4" cy="143.9" rx="2.56" ry="2.32"/><ellipse cx="207.6" cy="143.8" rx="2.56" ry="2.32"/><ellipse cx="218.0" cy="143.6" rx="2.56" ry="2.32"/><ellipse cx="228.4" cy="143.5" rx="2.56" ry="2.32"/><ellipse cx="239.0" cy="143.3" rx="2.56" ry="2.32"/><ellipse cx="249.6" cy="143.2" rx="2.56" ry="2.32"/><ellipse cx="260.3" cy="143.1" rx="2.56" ry="2.32"/><ellipse cx="271.1" cy="143.1" rx="2.56" ry="2.32"/><ellipse cx="281.9" cy="143.0" rx="2.56" ry="2.32"/><ellipse cx="292.8" cy="143.0" rx="2.56" ry="2.32"/><ellipse cx="303.8" cy="143.0" rx="2.56" ry="2.32"/><ellipse cx="314.8" cy="143.0" rx="2.56" ry="2.32"/><ellipse cx="325.8" cy="143.0" rx="2.56" ry="2.32"/><ellipse cx="336.9" cy="143.1" rx="2.56" ry="2.32"/><ellipse cx="348.0" cy="143.2" rx="2.56" ry="2.32"/><ellipse cx="359.1" cy="143.2" rx="2.56" ry="2.32"/><ellipse cx="370.2" cy="143.3" rx="2.56" ry="2.32"/><ellipse cx="381.3" cy="143.5" rx="2.56" ry="2.32"/><ellipse cx="392.4" cy="143.6" rx="2.56" ry="2.32"/><ellipse cx="403.5" cy="143.7" rx="2.56" ry="2.32"/><ellipse cx="414.6" cy="143.9" rx="2.56" ry="2.32"/><ellipse cx="425.7" cy="144.1" rx="2.56" ry="2.32"/><ellipse cx="436.8" cy="144.3" rx="2.56" ry="2.32"/><ellipse cx="447.8" cy="144.5" rx="2.56" ry="2.32"/><ellipse cx="458.8" cy="144.7" rx="2.56" ry="2.32"/><ellipse cx="469.8" cy="145.0" rx="2.56" ry="2.32"/><ellipse cx="480.7" cy="145.2" rx="2.56" ry="2.32"/><ellipse cx="491.5" cy="145.5" rx="2.56" ry="2.32"/><ellipse cx="161.2" cy="153.2" rx="2.57" ry="2.33"/><ellipse cx="171.1" cy="153.0" rx="2.57" ry="2.33"/><ellipse cx="181.1" cy="152.8" rx="2.57" ry="2.33"/><ellipse cx="191.2" cy="152.6" rx="2.57" ry="2.33"/><ellipse cx="201.5" cy="152.4" rx="2.57" ry="2.33"/><ellipse cx="211.8" cy="152.3" rx="2.57" ry="2.33"/><ellipse cx="222.3" cy="152.1" rx="2.57" ry="2.33"/><ellipse cx="232.8" cy="152.0" rx="2.57" ry="2.33"/><ellipse cx="243.5" cy="151.9" rx="2.57" ry="2.33"/><ellipse cx="254.2" cy="151.9" rx="2.57" ry="2.33"/><ellipse cx="265.0" cy="151.8" rx="2.57" ry="2.33"/><ellipse cx="275.9" cy="151.8" rx="2.57" ry="2.33"/><ellipse cx="286.8" cy="151.7" rx="2.57" ry="2.33"/><ellipse cx="297.8" cy="151.7" rx="2.57" ry="2.33"/><ellipse cx="308.8" cy="151.7" rx="2.57" ry="2.33"/><ellipse cx="319.9" cy="151.8" rx="2.57" ry="2.33"/><ellipse cx="331.0" cy="151.8" rx="2.57" ry="2.33"/><ellipse cx="342.1" cy="151.9" rx="2.57" ry="2.33"/><ellipse cx="353.3" cy="152.0" rx="2.57" ry="2.33"/><ellipse cx="364.4" cy="152.0" rx="2.57" ry="2.33"/><ellipse cx="375.6" cy="152.2" rx="2.57" ry="2.33"/><ellipse cx="386.8" cy="152.3" rx="2.57" ry="2.33"/><ellipse cx="398.0" cy="152.4" rx="2.57" ry="2.33"/><ellipse cx="409.1" cy="152.6" rx="2.57" ry="2.33"/><ellipse cx="420.3" cy="152.7" rx="2.57" ry="2.33"/><ellipse cx="431.4" cy="152.9" rx="2.57" ry="2.33"/><ellipse cx="442.5" cy="153.1" rx="2.57" ry="2.33"/><ellipse cx="453.6" cy="153.3" rx="2.57" ry="2.33"/><ellipse cx="464.6" cy="153.6" rx="2.57" ry="2.33"/><ellipse cx="475.6" cy="153.8" rx="2.57" ry="2.33"/><ellipse cx="486.6" cy="154.0" rx="2.57" ry="2.33"/><ellipse cx="165.0" cy="161.6" rx="2.57" ry="2.34"/><ellipse cx="175.0" cy="161.5" rx="2.57" ry="2.34"/><ellipse cx="185.1" cy="161.3" rx="2.57" ry="2.34"/><ellipse cx="195.3" cy="161.2" rx="2.57" ry="2.34"/><ellipse cx="205.6" cy="161.0" rx="2.57" ry="2.34"/><ellipse cx="216.1" cy="160.9" rx="2.57" ry="2.34"/><ellipse cx="226.7" cy="160.8" rx="2.57" ry="2.34"/><ellipse cx="237.3" cy="160.7" rx="2.57" ry="2.34"/><ellipse cx="248.1" cy="160.7" rx="2.57" ry="2.34"/><ellipse cx="258.9" cy="160.6" rx="2.57" ry="2.34"/><ellipse cx="269.8" cy="160.6" rx="2.57" ry="2.34"/><ellipse cx="280.7" cy="160.6" rx="2.57" ry="2.34"/><ellipse cx="291.7" cy="160.6" rx="2.57" ry="2.34"/><ellipse cx="302.8" cy="160.6" rx="2.57" ry="2.34"/><ellipse cx="313.9" cy="160.6" rx="2.57" ry="2.34"/><ellipse cx="325.0" cy="160.6" rx="2.57" ry="2.34"/><ellipse cx="336.2" cy="160.7" rx="2.57" ry="2.34"/><ellipse cx="347.4" cy="160.8" rx="2.57" ry="2.34"/><ellipse cx="358.7" cy="160.9" rx="2.57" ry="2.34"/><ellipse cx="369.9" cy="161.0" rx="2.57" ry="2.34"/><ellipse cx="381.1" cy="161.1" rx="2.57" ry="2.34"/><ellipse cx="392.4" cy="161.2" rx="2.57" ry="2.34"/><ellipse cx="403.6" cy="161.3" rx="2.57" ry="2.34"/><ellipse cx="414.8" cy="161.5" rx="2.57" ry="2.34"/><ellipse cx="426.0" cy="161.7" rx="2.57" ry="2.34"/><ellipse cx="437.2" cy="161.8" rx="2.57" ry="2.34"/><ellipse cx="448.4" cy="162.0" rx="2.57" ry="2.34"/><ellipse cx="459.5" cy="162.3" rx="2.57" ry="2.34"/><ellipse cx="470.5" cy="162.5" rx="2.57" ry="2.34"/><ellipse cx="481.6" cy="162.7" rx="2.57" ry="2.34"/><ellipse cx="492.5" cy="163.0" rx="2.57" ry="2.34"/><ellipse cx="158.9" cy="170.4" rx="2.57" ry="2.36"/><ellipse cx="168.8" cy="170.2" rx="2.57" ry="2.36"/><ellipse cx="178.9" cy="170.1" rx="2.57" ry="2.36"/><ellipse cx="189.1" cy="170.0" rx="2.57" ry="2.36"/><ellipse cx="199.5" cy="169.9" rx="2.57" ry="2.36"/><ellipse cx="209.9" cy="169.8" rx="2.57" ry="2.36"/><ellipse cx="220.5" cy="169.7" rx="2.57" ry="2.36"/><ellipse cx="231.1" cy="169.6" rx="2.57" ry="2.36"/><ellipse cx="241.9" cy="169.6" rx="2.57" ry="2.36"/><ellipse cx="252.7" cy="169.5" rx="2.57" ry="2.36"/><ellipse cx="263.6" cy="169.5" rx="2.57" ry="2.36"/><ellipse cx="274.6" cy="169.5" rx="2.57" ry="2.36"/><ellipse cx="285.6" cy="169.5" rx="2.57" ry="2.36"/><ellipse cx="296.7" cy="169.5" rx="2.57" ry="2.36"/><ellipse cx="307.9" cy="169.5" rx="2.57" ry="2.36"/><ellipse cx="319.1" cy="169.6" rx="2.57" ry="2.36"/><ellipse cx="330.3" cy="169.6" rx="2.57" ry="2.36"/><ellipse cx="341.5" cy="169.7" rx="2.57" ry="2.36"/><ellipse cx="352.8" cy="169.8" rx="2.57" ry="2.36"/><ellipse cx="364.1" cy="169.9" rx="2.57" ry="2.36"/><ellipse cx="375.4" cy="170.0" rx="2.57" ry="2.36"/><ellipse cx="386.7" cy="170.1" rx="2.57" ry="2.36"/><ellipse cx="398.0" cy="170.2" rx="2.57" ry="2.36"/><ellipse cx="409.3" cy="170.4" rx="2.57" ry="2.36"/><ellipse cx="420.6" cy="170.5" rx="2.57" ry="2.36"/><ellipse cx="431.8" cy="170.7" rx="2.57" ry="2.36"/><ellipse cx="443.0" cy="170.9" rx="2.57" ry="2.36"/><ellipse cx="454.2" cy="171.1" rx="2.57" ry="2.36"/><ellipse cx="465.4" cy="171.3" rx="2.57" ry="2.36"/><ellipse cx="476.5" cy="171.5" rx="2.57" ry="2.36"/><ellipse cx="487.5" cy="171.7" rx="2.57" ry="2.36"/><ellipse cx="162.7" cy="179.1" rx="2.58" ry="2.37"/><ellipse cx="172.8" cy="179.0" rx="2.58" ry="2.37"/><ellipse cx="183.0" cy="178.9" rx="2.58" ry="2.37"/><ellipse cx="193.3" cy="178.8" rx="2.58" ry="2.37"/><ellipse cx="203.7" cy="178.7" rx="2.58" ry="2.37"/><ellipse cx="214.3" cy="178.6" rx="2.58" ry="2.37"/><ellipse cx="224.9" cy="178.6" rx="2.58" ry="2.37"/><ellipse cx="235.7" cy="178.5" rx="2.58" ry="2.37"/><ellipse cx="246.5" cy="178.5" rx="2.58" ry="2.37"/><ellipse cx="257.5" cy="178.5" rx="2.58" ry="2.37"/><ellipse cx="268.5" cy="178.5" rx="2.58" ry="2.37"/><ellipse cx="279.5" cy="178.5" rx="2.58" ry="2.37"/><ellipse cx="290.6" cy="178.5" rx="2.58" ry="2.37"/><ellipse cx="301.8" cy="178.6" rx="2.58" ry="2.37"/><ellipse cx="313.0" cy="178.6" rx="2.58" ry="2.37"/><ellipse cx="324.3" cy="178.7" rx="2.58" ry="2.37"/><ellipse cx="335.6" cy="178.7" rx="2.58" ry="2.37"/><ellipse cx="346.9" cy="178.8" rx="2.58" ry="2.37"/><ellipse cx="358.3" cy="178.9" rx="2.58" ry="2.37"/><ellipse cx="369.6" cy="179.0" rx="2.58" ry="2.37"/><ellipse cx="381.0" cy="179.1" rx="2.58" ry="2.37"/><ellipse cx="392.3" cy="179.2" rx="2.58" ry="2.37"/><ellipse cx="403.7" cy="179.4" rx="2.58" ry="2.37"/><ellipse cx="415.0" cy="179.5" rx="2.58" ry="2.37"/><ellipse cx="426.3" cy="179.7" rx="2.58" ry="2.37"/><ellipse cx="437.6" cy="179.8" rx="2.58" ry="2.37"/><ellipse cx="448.9" cy="180.0" rx="2.58" ry="2.37"/><ellipse cx="460.1" cy="180.2" rx="2.58" ry="2.37"/><ellipse cx="471.3" cy="180.4" rx="2.58" ry="2.37"/><ellipse cx="482.4" cy="180.6" rx="2.58" ry="2.37"/><ellipse cx="493.5" cy="180.8" rx="2.58" ry="2.37"/><ellipse cx="156.6" cy="188.0" rx="2.58" ry="2.38"/><ellipse cx="166.6" cy="187.9" rx="2.58" ry="2.38"/><ellipse cx="176.8" cy="187.8" rx="2.58" ry="2.38"/><ellipse cx="187.1" cy="187.8" rx="2.58" ry="2.38"/><ellipse cx="197.5" cy="187.7" rx="2.58" ry="2.38"/><ellipse cx="208.1" cy="187.6" rx="2.58" ry="2.38"/><ellipse cx="218.7" cy="187.6" rx="2.58" ry="2.38"/><ellipse cx="229.5" cy="187.6" rx="2.58" ry="2.38"/><ellipse cx="240.3" cy="187.6" rx="2.58" ry="2.38"/><ellipse cx="251.3" cy="187.6" rx="2.58" ry="2.38"/><ellipse cx="262.3" cy="187.6" rx="2.58" ry="2.38"/><ellipse cx="273.4" cy="187.6" rx="2.58" ry="2.38"/><ellipse cx="284.5" cy="187.6" rx="2.58" ry="2.38"/><ellipse cx="295.7" cy="187.7" rx="2.58" ry="2.38"/><ellipse cx="307.0" cy="187.7" rx="2.58" ry="2.38"/><ellipse cx="318.3" cy="187.8" rx="2.58" ry="2.38"/><ellipse cx="329.6" cy="187.8" rx="2.58" ry="2.38"/><ellipse cx="341.0" cy="187.9" rx="2.58" ry="2.38"/><ellipse cx="352.4" cy="188.0" rx="2.58" ry="2.38"/><ellipse cx="363.8" cy="188.1" rx="2.58" ry="2.38"/><ellipse cx="375.2" cy="188.2" rx="2.58" ry="2.38"/><ellipse cx="386.6" cy="188.3" rx="2.58" ry="2.38"/><ellipse cx="398.0" cy="188.5" rx="2.58" ry="2.38"/><ellipse cx="409.4" cy="188.6" rx="2.58" ry="2.38"/><ellipse cx="420.8" cy="188.7" rx="2.58" ry="2.38"/><ellipse cx="432.2" cy="188.9" rx="2.58" ry="2.38"/><ellipse cx="443.5" cy="189.0" rx="2.58" ry="2.38"/><ellipse cx="454.8" cy="189.2" rx="2.58" ry="2.38"/><ellipse cx="466.1" cy="189.4" rx="2.58" ry="2.38"/><ellipse cx="477.3" cy="189.6" rx="2.58" ry="2.38"/><ellipse cx="488.4" cy="189.8" rx="2.58" ry="2.38"/><ellipse cx="160.5" cy="196.9" rx="2.58" ry="2.40"/><ellipse cx="170.6" cy="196.8" rx="2.58" ry="2.40"/><ellipse cx="180.9" cy="196.8" rx="2.58" ry="2.40"/><ellipse cx="191.3" cy="196.8" rx="2.58" ry="2.40"/><ellipse cx="201.9" cy="196.7" rx="2.58" ry="2.40"/><ellipse cx="212.5" cy="196.7" rx="2.58" ry="2.40"/><ellipse cx="223.3" cy="196.7" rx="2.58" ry="2.40"/><ellipse cx="234.1" cy="196.7" rx="2.58" ry="2.40"/><ellipse cx="245.1" cy="196.7" rx="2.58" ry="2.40"/><ellipse cx="256.1" cy="196.8" rx="2.58" ry="2.40"/><ellipse cx="267.2" cy="196.8" rx="2.58" ry="2.40"/><ellipse cx="278.4" cy="196.8" rx="2.58" ry="2.40"/><ellipse cx="289.6" cy="196.9" rx="2.58" ry="2.40"/><ellipse cx="300.9" cy="196.9" rx="2.58" ry="2.40"/><ellipse cx="312.2" cy="197.0" rx="2.58" ry="2.40"/><ellipse cx="323.6" cy="197.1" rx="2.58" ry="2.40"/><ellipse cx="335.0" cy="197.1" rx="2.58" ry="2.40"/><ellipse cx="346.4" cy="197.2" rx="2.58" ry="2.40"/><ellipse cx="357.9" cy="197.3" rx="2.58" ry="2.40"/><ellipse cx="369.4" cy="197.4" rx="2.58" ry="2.40"/><ellipse cx="380.8" cy="197.5" rx="2.58" ry="2.40"/><ellipse cx="392.3" cy="197.7" rx="2.58" ry="2.40"/><ellipse cx="403.8" cy="197.8" rx="2.58" ry="2.40"/><ellipse cx="415.2" cy="197.9" rx="2.58" ry="2.40"/><ellipse cx="426.6" cy="198.0" rx="2.58" ry="2.40"/><ellipse cx="438.1" cy="198.2" rx="2.58" ry="2.40"/><ellipse cx="449.4" cy="198.3" rx="2.58" ry="2.40"/><ellipse cx="460.8" cy="198.5" rx="2.58" ry="2.40"/><ellipse cx="472.0" cy="198.7" rx="2.58" ry="2.40"/><ellipse cx="483.3" cy="198.8" rx="2.58" ry="2.40"/><ellipse cx="494.5" cy="199.0" rx="2.58" ry="2.40"/><ellipse cx="154.4" cy="206.0" rx="2.59" ry="2.41"/><ellipse cx="164.5" cy="205.9" rx="2.59" ry="2.41"/><ellipse cx="174.8" cy="205.9" rx="2.59" ry="2.41"/><ellipse cx="185.1" cy="205.9" rx="2.59" ry="2.41"/><ellipse cx="195.7" cy="205.9" rx="2.59" ry="2.41"/><ellipse cx="206.3" cy="205.9" rx="2.59" ry="2.41"/><ellipse cx="217.0" cy="205.9" rx="2.59" ry="2.41"/><ellipse cx="227.9" cy="205.9" rx="2.59" ry="2.41"/><ellipse cx="238.8" cy="206.0" rx="2.59" ry="2.41"/><ellipse cx="249.9" cy="206.0" rx="2.59" ry="2.41"/><ellipse cx="261.0" cy="206.1" rx="2.59" ry="2.41"/><ellipse cx="272.2" cy="206.1" rx="2.59" ry="2.41"/><ellipse cx="283.4" cy="206.2" rx="2.59" ry="2.41"/><ellipse cx="294.8" cy="206.2" rx="2.59" ry="2.41"/><ellipse cx="306.1" cy="206.3" rx="2.59" ry="2.41"/><ellipse cx="317.5" cy="206.4" rx="2.59" ry="2.41"/><ellipse cx="329.0" cy="206.5" rx="2.59" ry="2.41"/><ellipse cx="340.5" cy="206.5" rx="2.59" ry="2.41"/><ellipse cx="352.0" cy="206.6" rx="2.59" ry="2.41"/><ellipse cx="363.5" cy="206.7" rx="2.59" ry="2.41"/><ellipse cx="375.0" cy="206.8" rx="2.59" ry="2.41"/><ellipse cx="386.5" cy="207.0" rx="2.59" ry="2.41"/><ellipse cx="398.0" cy="207.1" rx="2.59" ry="2.41"/><ellipse cx="409.6" cy="207.2" rx="2.59" ry="2.41"/><ellipse cx="421.1" cy="207.3" rx="2.59" ry="2.41"/><ellipse cx="432.5" cy="207.5" rx="2.59" ry="2.41"/><ellipse cx="444.0" cy="207.6" rx="2.59" ry="2.41"/><ellipse cx="455.4" cy="207.7" rx="2.59" ry="2.41"/><ellipse cx="466.7" cy="207.9" rx="2.59" ry="2.41"/><ellipse cx="478.1" cy="208.0" rx="2.59" ry="2.41"/><ellipse cx="489.3" cy="208.2" rx="2.59" ry="2.41"/><ellipse cx="158.4" cy="215.1" rx="2.59" ry="2.42"/><ellipse cx="168.6" cy="215.1" rx="2.59" ry="2.42"/><ellipse cx="179.0" cy="215.1" rx="2.59" ry="2.42"/><ellipse cx="189.5" cy="215.1" rx="2.59" ry="2.42"/><ellipse cx="200.1" cy="215.2" rx="2.59" ry="2.42"/><ellipse cx="210.8" cy="215.2" rx="2.59" ry="2.42"/><ellipse cx="221.7" cy="215.2" rx="2.59" ry="2.42"/><ellipse cx="232.6" cy="215.3" rx="2.59" ry="2.42"/><ellipse cx="243.7" cy="215.3" rx="2.59" ry="2.42"/><ellipse cx="254.8" cy="215.4" rx="2.59" ry="2.42"/><ellipse cx="266.0" cy="215.5" rx="2.59" ry="2.42"/><ellipse cx="277.3" cy="215.5" rx="2.59" ry="2.42"/><ellipse cx="288.6" cy="215.6" rx="2.59" ry="2.42"/><ellipse cx="300.0" cy="215.7" rx="2.59" ry="2.42"/><ellipse cx="311.4" cy="215.8" rx="2.59" ry="2.42"/><ellipse cx="322.9" cy="215.9" rx="2.59" ry="2.42"/><ellipse cx="334.4" cy="215.9" rx="2.59" ry="2.42"/><ellipse cx="346.0" cy="216.0" rx="2.59" ry="2.42"/><ellipse cx="357.5" cy="216.1" rx="2.59" ry="2.42"/><ellipse cx="369.1" cy="216.2" rx="2.59" ry="2.42"/><ellipse cx="380.7" cy="216.3" rx="2.59" ry="2.42"/><ellipse cx="392.3" cy="216.5" rx="2.59" ry="2.42"/><ellipse cx="403.9" cy="216.6" rx="2.59" ry="2.42"/><ellipse cx="415.4" cy="216.7" rx="2.59" ry="2.42"/><ellipse cx="427.0" cy="216.8" rx="2.59" ry="2.42"/><ellipse cx="438.5" cy="216.9" rx="2.59" ry="2.42"/><ellipse cx="449.9" cy="217.1" rx="2.59" ry="2.42"/><ellipse cx="461.4" cy="217.2" rx="2.59" ry="2.42"/><ellipse cx="472.8" cy="217.3" rx="2.59" ry="2.42"/><ellipse cx="484.1" cy="217.5" rx="2.59" ry="2.42"/><ellipse cx="495.4" cy="217.6" rx="2.59" ry="2.42"/><ellipse cx="152.3" cy="224.2" rx="2.60" ry="2.44"/><ellipse cx="162.5" cy="224.3" rx="2.60" ry="2.44"/><ellipse cx="172.8" cy="224.3" rx="2.60" ry="2.44"/><ellipse cx="183.3" cy="224.4" rx="2.60" ry="2.44"/><ellipse cx="193.9" cy="224.5" rx="2.60" ry="2.44"/><ellipse cx="204.6" cy="224.5" rx="2.60" ry="2.44"/><ellipse cx="215.4" cy="224.6" rx="2.60" ry="2.44"/><ellipse cx="226.4" cy="224.7" rx="2.60" ry="2.44"/><ellipse cx="237.4" cy="224.7" rx="2.60" ry="2.44"/><ellipse cx="248.6" cy="224.8" rx="2.60" ry="2.44"/><ellipse cx="259.8" cy="224.9" rx="2.60" ry="2.44"/><ellipse cx="271.1" cy="225.0" rx="2.60" ry="2.44"/><ellipse cx="282.4" cy="225.1" rx="2.60" ry="2.44"/><ellipse cx="293.8" cy="225.2" rx="2.60" ry="2.44"/><ellipse cx="305.3" cy="225.2" rx="2.60" ry="2.44"/><ellipse cx="316.8" cy="225.3" rx="2.60" ry="2.44"/><ellipse cx="328.4" cy="225.4" rx="2.60" ry="2.44"/><ellipse cx="340.0" cy="225.5" rx="2.60" ry="2.44"/><ellipse cx="351.6" cy="225.6" rx="2.60" ry="2.44"/><ellipse cx="363.2" cy="225.7" rx="2.60" ry="2.44"/><ellipse cx="374.8" cy="225.8" rx="2.60" ry="2.44"/><ellipse cx="386.5" cy="225.9" rx="2.60" ry="2.44"/><ellipse cx="398.1" cy="226.1" rx="2.60" ry="2.44"/><ellipse cx="409.7" cy="226.2" rx="2.60" ry="2.44"/><ellipse cx="421.3" cy="226.3" rx="2.60" ry="2.44"/><ellipse cx="432.9" cy="226.4" rx="2.60" ry="2.44"/><ellipse cx="444.4" cy="226.5" rx="2.60" ry="2.44"/><ellipse cx="456.0" cy="226.6" rx="2.60" ry="2.44"/><ellipse cx="467.4" cy="226.8" rx="2.60" ry="2.44"/><ellipse cx="478.8" cy="226.9" rx="2.60" ry="2.44"/><ellipse cx="490.2" cy="227.0" rx="2.60" ry="2.44"/><ellipse cx="156.4" cy="233.6" rx="2.60" ry="2.45"/><ellipse cx="166.7" cy="233.6" rx="2.60" ry="2.45"/><ellipse cx="177.1" cy="233.7" rx="2.60" ry="2.45"/><ellipse cx="187.7" cy="233.8" rx="2.60" ry="2.45"/><ellipse cx="198.4" cy="233.9" rx="2.60" ry="2.45"/><ellipse cx="209.2" cy="234.0" rx="2.60" ry="2.45"/><ellipse cx="220.2" cy="234.1" rx="2.60" ry="2.45"/><ellipse cx="231.2" cy="234.2" rx="2.60" ry="2.45"/><ellipse cx="242.3" cy="234.3" rx="2.60" ry="2.45"/><ellipse cx="253.5" cy="234.4" rx="2.60" ry="2.45"/><ellipse cx="264.8" cy="234.5" rx="2.60" ry="2.45"/><ellipse cx="276.2" cy="234.6" rx="2.60" ry="2.45"/><ellipse cx="287.6" cy="234.7" rx="2.60" ry="2.45"/><ellipse cx="299.1" cy="234.8" rx="2.60" ry="2.45"/><ellipse cx="310.7" cy="234.9" rx="2.60" ry="2.45"/><ellipse cx="322.3" cy="235.0" rx="2.60" ry="2.45"/><ellipse cx="333.9" cy="235.1" rx="2.60" ry="2.45"/><ellipse cx="345.5" cy="235.2" rx="2.60" ry="2.45"/><ellipse cx="357.2" cy="235.3" rx="2.60" ry="2.45"/><ellipse cx="368.9" cy="235.4" rx="2.60" ry="2.45"/><ellipse cx="380.6" cy="235.5" rx="2.60" ry="2.45"/><ellipse cx="392.3" cy="235.6" rx="2.60" ry="2.45"/><ellipse cx="403.9" cy="235.7" rx="2.60" ry="2.45"/><ellipse cx="415.6" cy="235.8" rx="2.60" ry="2.45"/><ellipse cx="427.3" cy="235.9" rx="2.60" ry="2.45"/><ellipse cx="438.9" cy="236.1" rx="2.60" ry="2.45"/><ellipse cx="450.5" cy="236.2" rx="2.60" ry="2.45"/><ellipse cx="462.0" cy="236.3" rx="2.60" ry="2.45"/><ellipse cx="473.5" cy="236.4" rx="2.60" ry="2.45"/><ellipse cx="484.9" cy="236.5" rx="2.60" ry="2.45"/><ellipse cx="496.3" cy="236.6" rx="2.60" ry="2.45"/></g><g fill="#505050"><ellipse cx="234.1" cy="55.8" rx="1.4" ry="1.1"/><ellipse cx="228.2" cy="63.4" rx="1.4" ry="1.1"/><ellipse cx="248.0" cy="62.7" rx="1.4" ry="1.1"/><ellipse cx="232.1" cy="70.7" rx="1.4" ry="1.1"/><ellipse cx="413.7" cy="62.4" rx="1.4" ry="1.1"/><ellipse cx="424.2" cy="62.6" rx="1.4" ry="1.1"/><ellipse cx="434.6" cy="62.9" rx="1.4" ry="1.1"/><ellipse cx="429.6" cy="70.4" rx="1.4" ry="1.1"/><ellipse cx="316.6" cy="109.1" rx="1.4" ry="1.1"/><ellipse cx="327.4" cy="109.1" rx="1.4" ry="1.1"/><ellipse cx="310.7" cy="117.4" rx="1.4" ry="1.1"/><ellipse cx="321.6" cy="117.4" rx="1.4" ry="1.1"/><ellipse cx="315.7" cy="125.9" rx="1.4" ry="1.1"/><ellipse cx="326.6" cy="125.9" rx="1.4" ry="1.1"/><ellipse cx="214.3" cy="178.6" rx="1.4" ry="1.1"/><ellipse cx="224.9" cy="178.6" rx="1.4" ry="1.1"/><ellipse cx="235.7" cy="178.5" rx="1.4" ry="1.1"/><ellipse cx="218.7" cy="187.6" rx="1.4" ry="1.1"/><ellipse cx="420.6" cy="170.5" rx="1.4" ry="1.1"/><ellipse cx="431.8" cy="170.7" rx="1.4" ry="1.1"/><ellipse cx="415.0" cy="179.5" rx="1.4" ry="1.1"/><ellipse cx="420.8" cy="188.7" rx="1.4" ry="1.1"/></g><g stroke-width="1.15" fill="none"><path d="M322.3,121.6 L368.5,121.6" stroke="#d01a1a"/><path d="M366,119.4 L371,121.6 L366,123.8 Z" fill="#d01a1a" stroke="none"/><path d="M322.3,121.6 L325.8,141" stroke="#1a1aff"/><path d="M323.6,140.2 L326.2,143 L327.8,139.6 Z" fill="#1a1aff" stroke="none"/><path d="M322.3,121.6 L320.5,164" stroke="#22dd22"/><path d="M318.3,163 L320.4,166.2 L322.5,163 Z" fill="#22dd22" stroke="none"/></g><g stroke-width="1.0" fill="none"><path d="M373.5,128.5 L379.5,136.5 M379.5,128.5 L373.5,136.5" stroke="#e02020"/><path d="M329,148.8 L334,148.8 L329,156.2 L334,156.2" stroke="#2020ff"/><path d="M322.3,172.5 L325.4,176.5 L328.5,172.5 M325.4,176.5 L325.4,180.8" stroke="#22dd22"/></g></svg><div style="position:absolute;left:0px;top:407px;width:18px;height:495px;background:#ffffff"></div><div style="position:absolute;left:0px;top:414px;width:18px;height:20px;background:#ececec"></div><div style="position:absolute;left:0px;top:434px;width:18px;height:1px;background:#c8c8c8"></div><div style="position:absolute;left:0px;top:435px;width:18px;height:26px;background:#f8f8f8"></div><div style="position:absolute;left:0px;top:461px;width:18px;height:1px;background:#c8c8c8"></div><div style="position:absolute;left:0px;top:551px;width:18px;height:1px;background:#c8c8c8"></div><div style="position:absolute;left:0px;top:552px;width:18px;height:27px;background:#f8f8f8"></div><div style="position:absolute;left:0px;top:579px;width:18px;height:1px;background:#c8c8c8"></div><div style="position:absolute;left:0px;top:580px;width:18px;height:253px;background:#ececec"></div><div style="position:absolute;left:0px;top:833px;width:18px;height:1px;background:#d0d0d0"></div><div style="position:absolute;left:0px;top:836px;width:18px;height:1px;background:#b8b8b8"></div><div style="position:absolute;left:0px;top:841px;width:18px;height:1px;background:#c8c8c8"></div><div style="position:absolute;left:0px;top:842px;width:18px;height:31px;background:#f8f8f8"></div><div style="position:absolute;left:-10px;top:842px;width:19px;height:22px;background:#e6e6e6;border:1px solid #c8c8c8;border-radius:3px;box-sizing:border-box"></div><div style="position:absolute;left:0px;top:873px;width:18px;height:1px;background:#a8a8a8"></div><div style="position:absolute;left:0;top:407px;width:18px;height:30px;overflow:hidden"><div class="t" style="left:-2px;top:9.5px;font-size:12.75px">n Tl</div></div><div style="position:absolute;left:18px;top:293px;width:670px;height:609px;overflow:hidden;background:#fff"><div style="position:absolute;left:0px;top:0px;width:1px;height:609px;background:#6f6f6f"></div><div style="position:absolute;left:0px;top:0px;width:670px;height:1px;background:#6f6f6f"></div><div style="position:absolute;left:6px;top:4px;width:664px;height:20px;background:#ececec"></div><div class="t" style="left:10.399999999999999px;top:7px;font-size:12.75px;">Image Acquisition : Image Acquisition 01</div><div style="position:absolute;left:4px;top:24px;width:670px;height:585px;background:#ffffff;border-left:1px solid #b4b4b4;border-top:1px solid #b4b4b4;box-sizing:border-box"></div><div class="t" style="left:15.399999999999999px;top:29.5px;font-size:12.75px;"><u>F</u>ile</div><div class="t" style="left:49.8px;top:29.5px;font-size:12.75px;">Acq<u>u</u>isition</div><div class="t" style="left:124.4px;top:29.5px;font-size:12.75px;">Code <u>G</u>eneration</div><div class="t" style="left:233.8px;top:29.5px;font-size:12.75px;"><u>H</u>elp</div><div style="position:absolute;left:5px;top:46px;width:665px;height:1px;background:#dcdcdc"></div><div style="position:absolute;left:5px;top:80px;width:665px;height:1px;background:#c8c8c8"></div><div style="position:absolute;left:5px;top:81px;width:665px;height:528px;background:#f8f8f8"></div><svg style="position:absolute;left:13px;top:54px" width="22" height="19" viewBox="31 347 22 19"><path fill="none" stroke="#161616" stroke-width="1.7" stroke-linejoin="miter" d="M32.5,364.5 L32.5,349.4 L36.7,349.4 L39.7,352.1 L49.7,352.1 L49.7,354.0"/><path fill="none" stroke="#161616" stroke-width="1.7" stroke-linejoin="miter" d="M34.2,354.5 L51.2,354.5 L49.7,364.5 L32.5,364.5 Z"/></svg><svg style="position:absolute;left:43px;top:54px" width="20" height="20" viewBox="61 347 20 20"><path fill="none" stroke="#161616" stroke-width="1.7" stroke-linejoin="miter" d="M62.4,349.2 L75.0,349.2 L78.5,352.7 L78.5,364.7 L62.4,364.7 Z"/><path fill="none" stroke="#161616" stroke-width="1.7" stroke-linejoin="miter" d="M66.0,349.2 L66.0,353.8 L75.0,353.8 L75.0,349.2"/><path fill="none" stroke="#161616" stroke-width="1.7" stroke-linejoin="miter" d="M66.0,364.7 L66.0,359.1 L75.0,359.1 L75.0,364.7"/></svg><div style="position:absolute;left:71px;top:58px;width:1px;height:15px;background:#d8d8d8"></div><svg style="position:absolute;left:78px;top:52px" width="23" height="23" viewBox="96 345 23 23"><path fill="none" stroke="#161616" stroke-width="1.7" stroke-linejoin="miter" stroke-width="1.5" d="M99.1,348.5 L105.3,352.0 L99.1,355.5 Z"/><rect fill="none" stroke="#161616" stroke-width="1.7" stroke-linejoin="miter" x="108.0" y="347.3" width="8" height="12.4"/><path fill="none" stroke="#222" stroke-width="1" d="M109.8,351.0 h4.4 M109.8,353.5 h4.4 M109.8,356.0 h4.4"/><path fill="#161616" d="M98.3,357.5 h2 v2.5 h-2 Z M101.3,357.5 h3.5 v3 h-3.5 Z M98.3,362.0 h3.5 v3.5 h-3.5 Z M102.8,362.0 h2 v3.5 h-2 Z"/><path fill="#fff" d="M102.2,358.3 h1.6 v1.6 h-1.6 Z M99.1,362.9 h1.8 v1.8 h-1.8 Z"/></svg><svg style="position:absolute;left:114px;top:53px" width="22" height="22" viewBox="132 346 22 22"><path fill="none" stroke="#161616" stroke-width="1.7" stroke-linejoin="miter" stroke-width="1.5" d="M137.60000000000002,347.9 v3.4 M143.60000000000002,347.9 v3.4"/><path fill="none" stroke="#161616" stroke-width="1.7" stroke-linejoin="miter" stroke-width="1.5" d="M146.60000000000002,353.7 v-2.4 h-12.3 v7 l3.5,5 v2.8 h3.2"/><circle cx="147.4" cy="361.29999999999995" r="2.6" fill="none" stroke="#161616" stroke-width="1.6"/><path stroke="#161616" stroke-width="1.5" d="M147.4,356.9 v2 M147.4,363.7 v2 M143.0,361.29999999999995 h2 M149.8,361.29999999999995 h2 M144.3,358.2 l1.2,1.2 M149.3,363.2 l1.2,1.2 M150.5,358.2 l-1.2,1.2 M145.5,363.2 l-1.2,1.2"/></svg><svg style="position:absolute;left:142px;top:52px" width="24" height="24" viewBox="160 345 24 24"><path fill="none" stroke="#161616" stroke-width="1.7" stroke-linejoin="miter" stroke-width="1.5" d="M166.4,359.2 h-3.9 v-11 h14 v4"/><path fill="none" stroke="#161616" stroke-width="1.7" stroke-linejoin="miter" stroke-width="1.5" d="M176.4,353.2 l5.2,-4 v8 Z"/><path fill="#fff" stroke="#fff" stroke-width="2.5" d="M172.4,355.2 l8.5,6 l-8.5,5.6 Z"/><path fill="none" stroke="#161616" stroke-width="1.7" stroke-linejoin="miter" stroke-width="1.5" d="M172.4,355.2 l8.5,6 l-8.5,5.6 Z"/><path fill="none" stroke="#161616" stroke-width="1.7" stroke-linejoin="miter" stroke-width="1.5" d="M170.20000000000002,354.8 h-1.6 v11.6 h1.6"/></svg><svg style="position:absolute;left:171px;top:52px" width="24" height="24" viewBox="189 345 24 24"><path fill="none" stroke="#161616" stroke-width="1.7" stroke-linejoin="miter" stroke-width="1.5" d="M198.8,359.2 h-7.3 v-11 h14 v4"/><path fill="none" stroke="#161616" stroke-width="1.7" stroke-linejoin="miter" stroke-width="1.5" d="M205.4,353.2 l5.2,-4 v8 Z"/><path fill="#fff" stroke="#fff" stroke-width="2.5" d="M201.4,355.2 l8.5,6 l-8.5,5.6 Z"/><path fill="none" stroke="#161616" stroke-width="1.7" stroke-linejoin="miter" stroke-width="1.5" d="M201.4,355.2 l8.5,6 l-8.5,5.6 Z"/></svg><div style="position:absolute;left:201px;top:57px;width:1px;height:15px;background:#d8d8d8"></div><svg style="position:absolute;left:207px;top:52px" width="24" height="24" viewBox="225 345 24 24"><circle cx="236.9" cy="357" r="9.1" fill="none" stroke="#161616" stroke-width="1.5"/><path fill="none" stroke="#161616" stroke-width="1.5" d="M233.20000000000002,353.2 Q233.5,350.4 236.9,350.4 Q240.6,350.4 240.6,353.6 Q240.6,356 237.5,358.4 Q236.6,359.4 236.6,361"/><rect x="235.8" y="362.2" width="2" height="2" fill="#161616"/></svg><div style="position:absolute;left:10px;top:112px;width:660px;height:497px;background:#f8f8f8;border-left:1px solid #c0c0c0;border-top:1px solid #c0c0c0;box-sizing:border-box"></div><div style="position:absolute;left:10px;top:88px;width:65px;height:24px;background:#e6e6e6;border:1px solid #c6c6c6;border-bottom:none;border-radius:2px 2px 0 0;box-sizing:border-box"></div><div class="t" style="left:21.9px;top:93.69999999999999px;font-size:12.75px;">Source</div><div style="position:absolute;left:161px;top:88px;width:94px;height:24px;background:#e6e6e6;border:1px solid #c6c6c6;border-bottom:none;border-radius:2px 2px 0 0;box-sizing:border-box"></div><div class="t" style="left:172.4px;top:93.69999999999999px;font-size:12.75px;color:#8a8a8a">EasyParams</div><div style="position:absolute;left:254px;top:88px;width:91px;height:24px;background:#e6e6e6;border:1px solid #c6c6c6;border-bottom:none;border-radius:2px 2px 0 0;box-sizing:border-box"></div><div class="t" style="left:265.7px;top:93.69999999999999px;font-size:12.75px;color:#8a8a8a">Parameters</div><div style="position:absolute;left:344px;top:88px;width:66px;height:24px;background:#e6e6e6;border:1px solid #c6c6c6;border-bottom:none;border-radius:2px 2px 0 0;box-sizing:border-box"></div><div class="t" style="left:355.6px;top:93.69999999999999px;font-size:12.75px;">Inspect</div><div style="position:absolute;left:409px;top:88px;width:119px;height:24px;background:#e6e6e6;border:1px solid #c6c6c6;border-bottom:none;border-radius:2px 2px 0 0;box-sizing:border-box"></div><div class="t" style="left:420.3px;top:93.69999999999999px;font-size:12.75px;">Code Generation</div><div style="position:absolute;left:74px;top:86px;width:88px;height:27px;background:#f8f8f8;border:1px solid #c6c6c6;border-bottom:none;border-radius:2px 2px 0 0;box-sizing:border-box"></div><div class="t" style="left:85.8px;top:93.19999999999999px;font-size:12.75px;">Connection</div><div class="t" style="left:16px;top:123.10000000000002px;font-size:12.75px;">Interface Library</div><div style="position:absolute;left:116px;top:118px;width:600px;height:24px;background:#ededed;border:1px solid #c4c4c4;border-radius:3px;box-sizing:border-box"></div><div class="t" style="left:118.6px;top:122.80000000000001px;font-size:12.75px;">hAcqGigEVision2.dll (Rev. 20.11.17)</div><div style="position:absolute;left:16px;top:151px;width:660px;height:1px;background:#c8c8c8"></div><div class="t" style="left:16px;top:166.60000000000002px;font-size:12.75px;"><u>D</u>evice</div><div style="position:absolute;left:116px;top:162px;width:412px;height:24px;background:#ededed;border:1px solid #c4c4c4;border-radius:3px;box-sizing:border-box"></div><div style="position:absolute;left:507px;top:163px;width:20px;height:22px;background:linear-gradient(#f6f6f6,#eeeeee);border-radius:0 2px 2px 0"></div><div style="position:absolute;left:507px;top:163px;width:1px;height:22px;background:#cfcfcf"></div><svg style="position:absolute;left:511.5px;top:172px" width="10" height="6"><path d="M0.5,0 L8.5,0 L4.5,4.2 Z" fill="#505050"/></svg><div class="t" style="left:139.7px;top:166.8px;font-size:12.75px;"><span style='letter-spacing:-0.35px'>8c1f64d0e01c_Labforge_BN_4K_4GB_320MB_CS_ST</span></div><svg style="position:absolute;left:119px;top:165px" width="19" height="19" viewBox="137 458 19 19"><path fill="none" stroke="#111" stroke-width="1.2" d="M146,468.2 H138.6 V459.6 H149.4 V464.6 M150,463.6 L153.3,460.6 V464.6"/><path fill="none" stroke="#111" stroke-width="1.15" d="M147.6,466.8 H153.5 M147.6,474.3 H153.5 M148.1,467 C148.1,469 150.2,470 150.2,470.6 C150.2,471.2 148.1,472.2 148.1,474.2 M153,467 C153,469 150.9,470 150.9,470.6 C150.9,471.2 153,472.2 153,474.2"/><path fill="#111" d="M149.2,473.8 L150.55,472.4 L151.9,473.8 Z"/></svg><div class="t" style="left:559.7px;top:166.60000000000002px;font-size:12.75px;"><u>P</u>ort</div><div style="position:absolute;left:635.5px;top:162px;width:100px;height:24px;background:#ededed;border:1px solid #c4c4c4;border-radius:3px;box-sizing:border-box"></div><div class="t" style="left:638px;top:166.8px;font-size:12.75px;color:#9a9a9a">0</div><div class="t" style="left:16px;top:196.60000000000002px;font-size:12.75px;">Camera File</div><div style="position:absolute;left:116px;top:192px;width:600px;height:24px;background:#ededed;border:1px solid #c4c4c4;border-radius:3px;box-sizing:border-box"></div><div class="t" style="left:119.5px;top:196.8px;font-size:12.75px;">default</div><div style="position:absolute;left:116px;top:226px;width:15px;height:15px;background:#ececec;border:1px solid #b8b8b8;border-radius:2px;box-sizing:border-box"></div><div class="t" style="left:135px;top:226.5px;font-size:12.75px;color:#8a8a8a">T<u>r</u>igger</div><div style="position:absolute;left:641.5px;top:222px;width:80px;height:24px;background:linear-gradient(#f6f6f6,#ececec);border:1px solid #c0c0c0;border-radius:3px;box-sizing:border-box"></div><div style="position:absolute;left:16px;top:252px;width:660px;height:1px;background:#c8c8c8"></div><div class="t" style="left:16px;top:265.79999999999995px;font-size:12.75px;">Resolution</div><div class="t" style="left:115.19999999999999px;top:265.79999999999995px;font-size:12.75px;">X</div><div style="position:absolute;left:130px;top:261px;width:314px;height:24px;background:#ededed;border:1px solid #c4c4c4;border-radius:3px;box-sizing:border-box"></div><div style="position:absolute;left:422.5px;top:262px;width:20.5px;height:22px;background:linear-gradient(#f6f6f6,#eeeeee);border-radius:0 2px 2px 0"></div><div style="position:absolute;left:422.5px;top:262px;width:1px;height:22px;background:#cfcfcf"></div><svg style="position:absolute;left:427.0px;top:271px" width="10" height="6"><path d="M0.5,0 L8.5,0 L4.5,4.2 Z" fill="#505050"/></svg><div class="t" style="left:133px;top:265.79999999999995px;font-size:12.75px;">Default</div><div class="t" style="left:465.6px;top:265.79999999999995px;font-size:12.75px;">Y</div><div style="position:absolute;left:479px;top:261px;width:48px;height:24px;overflow:hidden"><div style="position:absolute;left:0px;top:0px;width:48px;height:24px;background:#ededed;border:1px solid #c4c4c4;border-radius:3px;box-sizing:border-box"></div><div style="position:absolute;left:28px;top:1px;width:19px;height:22px;background:linear-gradient(#f6f6f6,#eeeeee);border-radius:0 2px 2px 0"></div><div style="position:absolute;left:28px;top:1px;width:1px;height:22px;background:#cfcfcf"></div><svg style="position:absolute;left:32.5px;top:10px" width="10" height="6"><path d="M0.5,0 L8.5,0 L4.5,4.2 Z" fill="#505050"/></svg><div style="position:absolute;left:0;top:0;width:28px;height:24px;overflow:hidden"><div class="t" style="left:-15.5px;top:4.8px;font-size:12.75px">Default</div></div></div><div class="t" style="left:559.7px;top:265.79999999999995px;font-size:12.75px;">Co<u>l</u>or Space</div><div style="position:absolute;left:635.5px;top:261px;width:100px;height:24px;background:#ededed;border:1px solid #c4c4c4;border-radius:3px;box-sizing:border-box"></div><div class="t" style="left:638px;top:265.79999999999995px;font-size:12.75px;">default</div><div class="t" style="left:16px;top:295.6px;font-size:12.75px;"><u>F</u>ield</div><div style="position:absolute;left:116px;top:291px;width:412px;height:24px;background:#ededed;border:1px solid #c4c4c4;border-radius:3px;box-sizing:border-box"></div><div style="position:absolute;left:507px;top:292px;width:20px;height:22px;background:linear-gradient(#f6f6f6,#eeeeee);border-radius:0 2px 2px 0"></div><div style="position:absolute;left:507px;top:292px;width:1px;height:22px;background:#cfcfcf"></div><svg style="position:absolute;left:511.5px;top:301px" width="10" height="6"><path d="M0.5,0 L8.5,0 L4.5,4.2 Z" fill="#b0b0b0"/></svg><div class="t" style="left:119.5px;top:295.79999999999995px;font-size:12.75px;color:#8a8a8a">progressive</div><div class="t" style="left:559.7px;top:295.6px;font-size:12.75px;"><u>B</u>it Depth</div><div style="position:absolute;left:635.5px;top:291px;width:100px;height:24px;background:#ededed;border:1px solid #c4c4c4;border-radius:3px;box-sizing:border-box"></div><div class="t" style="left:638px;top:295.79999999999995px;font-size:12.75px;">-1</div><div style="position:absolute;left:16px;top:321px;width:660px;height:1px;background:#c8c8c8"></div><div class="t" style="left:16px;top:334.79999999999995px;font-size:12.75px;">Generic</div><div style="position:absolute;left:116px;top:330px;width:600px;height:24px;background:#ededed;border:1px solid #c4c4c4;border-radius:3px;box-sizing:border-box"></div><div style="position:absolute;left:16px;top:360px;width:660px;height:1px;background:#c8c8c8"></div><div style="position:absolute;left:16px;top:369px;width:204px;height:24px;background:linear-gradient(#f8f8f8,#ececec);border:1px solid #c2c2c2;border-radius:3px;box-sizing:border-box"></div><div class="t" style="left:16px;top:374px;width:204px;text-align:center;font-size:12.75px">Co<u>n</u>nect</div><div style="position:absolute;left:224px;top:369px;width:204px;height:24px;background:linear-gradient(#f8f8f8,#ececec);border:1px solid #c2c2c2;border-radius:3px;box-sizing:border-box"></div><div class="t" style="left:224px;top:374px;width:204px;text-align:center;font-size:12.75px"><u>S</u>nap</div><div style="position:absolute;left:432px;top:369px;width:204px;height:24px;background:linear-gradient(#f8f8f8,#ececec);border:1px solid #c2c2c2;border-radius:3px;box-sizing:border-box"></div><div class="t" style="left:432px;top:374px;width:204px;text-align:center;font-size:12.75px">Li<u>v</u>e</div><div style="position:absolute;left:640px;top:369px;width:204px;height:24px;background:linear-gradient(#f8f8f8,#ececec);border:1px solid #c2c2c2;border-radius:3px;box-sizing:border-box"></div></div><div style="position:absolute;left:688px;top:36px;width:679px;height:866px;overflow:hidden;background:#fff"><div style="position:absolute;left:0px;top:0px;width:1px;height:866px;background:#6f6f6f"></div><div style="position:absolute;left:0px;top:0px;width:679px;height:1px;background:#6f6f6f"></div><div style="position:absolute;left:6px;top:4px;width:634px;height:20px;background:#f28c27"></div><div class="t" style="left:10.799999999999955px;top:7px;font-size:12.75px;">Calibration : Calibration 01</div><svg style="position:absolute;left:640px;top:6px" width="36" height="16" viewBox="1328 42 36 16"><rect x="1334.6" y="44.5" width="7" height="7" rx="1.2" fill="none" stroke="#1e1e1e" stroke-width="1.2"/><rect x="1330.6" y="48" width="7.2" height="7.2" rx="1.2" fill="#fff" stroke="#1e1e1e" stroke-width="1.2"/><path d="M1349.6,45.6 L1358.2,54.2 M1358.2,45.6 L1349.6,54.2" stroke="#1e1e1e" stroke-width="1.2"/></svg><div style="position:absolute;left:4px;top:24px;width:672px;height:842px;background:#fff;border:1px solid #b4b4b4;border-bottom:none;box-sizing:border-box"></div><div class="t" style="left:15.899999999999977px;top:29px;font-size:12.75px;"><u>F</u>ile</div><div class="t" style="left:49.799999999999955px;top:29px;font-size:12.75px;"><u>C</u>alibration</div><div class="t" style="left:124.89999999999998px;top:29px;font-size:12.75px;">Code <u>G</u>eneration</div><div class="t" style="left:232.5px;top:29px;font-size:12.75px;"><u>H</u>elp</div><div style="position:absolute;left:5px;top:46px;width:670px;height:1px;background:#dcdcdc"></div><svg style="position:absolute;left:13px;top:53px" width="22" height="20" viewBox="701 89 22 20"><path fill="none" stroke="#161616" stroke-width="1.7" stroke-linejoin="miter" d="M703.0,107.2 L703.0,92.10000000000001 L707.2,92.10000000000001 L710.2,94.8 L720.2,94.8 L720.2,96.7"/><path fill="none" stroke="#161616" stroke-width="1.7" stroke-linejoin="miter" d="M704.7,97.2 L721.7,97.2 L720.2,107.2 L703.0,107.2 Z"/></svg><svg style="position:absolute;left:43px;top:53px" width="21" height="21" viewBox="731 89 21 21"><path fill="none" stroke="#161616" stroke-width="1.7" stroke-linejoin="miter" d="M733.1,92.10000000000001 L745.7,92.10000000000001 L749.2,95.60000000000001 L749.2,107.6 L733.1,107.6 Z"/><path fill="none" stroke="#161616" stroke-width="1.7" stroke-linejoin="miter" d="M736.7,92.10000000000001 L736.7,96.7 L745.7,96.7 L745.7,92.10000000000001"/><path fill="none" stroke="#161616" stroke-width="1.7" stroke-linejoin="miter" d="M736.7,107.6 L736.7,102.0 L745.7,102.0 L745.7,107.6"/></svg><div style="position:absolute;left:71px;top:57px;width:1px;height:15px;background:#d8d8d8"></div><svg style="position:absolute;left:78px;top:52px" width="23" height="23" viewBox="766 88 23 23"><path fill="none" stroke="#161616" stroke-width="1.7" stroke-linejoin="miter" stroke-width="1.5" d="M769.5999999999999,91.8 L775.8,95.3 L769.5999999999999,98.8 Z"/><rect fill="none" stroke="#161616" stroke-width="1.7" stroke-linejoin="miter" x="778.5" y="90.6" width="8" height="12.4"/><path fill="none" stroke="#222" stroke-width="1" d="M780.3,94.3 h4.4 M780.3,96.8 h4.4 M780.3,99.3 h4.4"/><path fill="#161616" d="M768.8,100.8 h2 v2.5 h-2 Z M771.8,100.8 h3.5 v3 h-3.5 Z M768.8,105.3 h3.5 v3.5 h-3.5 Z M773.3,105.3 h2 v3.5 h-2 Z"/><path fill="#fff" d="M772.6999999999999,101.6 h1.6 v1.6 h-1.6 Z M769.5999999999999,106.19999999999999 h1.8 v1.8 h-1.8 Z"/></svg><svg style="position:absolute;left:113px;top:52px" width="24" height="24" viewBox="801 88 24 24"><g fill="#1a1a1a"><circle cx="805.0" cy="91.9" r="1.85"/><circle cx="805.0" cy="96.9" r="1.85"/><circle cx="805.0" cy="101.9" r="1.85"/><circle cx="805.0" cy="106.9" r="1.85"/><circle cx="810.0" cy="92.9" r="1.85"/><circle cx="810.0" cy="97.9" r="1.85"/><circle cx="810.0" cy="102.9" r="1.85"/><circle cx="810.0" cy="107.9" r="1.85"/><circle cx="815.0" cy="91.9" r="1.85"/><circle cx="815.0" cy="96.9" r="1.85"/><circle cx="815.0" cy="101.9" r="1.85"/><circle cx="815.0" cy="106.9" r="1.85"/><circle cx="820.0" cy="92.9" r="1.85"/><circle cx="820.0" cy="97.9" r="1.85"/><circle cx="820.0" cy="102.9" r="1.85"/><circle cx="820.0" cy="107.9" r="1.85"/></g></svg><div style="position:absolute;left:143px;top:57px;width:1px;height:15px;background:#d8d8d8"></div><svg style="position:absolute;left:149px;top:52px" width="24" height="24" viewBox="837 88 24 24"><circle cx="849" cy="99.8" r="9.1" fill="none" stroke="#161616" stroke-width="1.5"/><path fill="none" stroke="#161616" stroke-width="1.5" d="M845.3,96.0 Q845.6,93.2 849,93.2 Q852.7,93.2 852.7,96.39999999999999 Q852.7,98.8 849.6,101.2 Q848.7,102.2 848.7,103.8"/><rect x="847.9" y="105.0" width="2" height="2" fill="#161616"/></svg><div style="position:absolute;left:5px;top:80px;width:670px;height:1px;background:#c8c8c8"></div><div style="position:absolute;left:5px;top:81px;width:670px;height:785px;background:#f8f8f8"></div><div style="position:absolute;left:10px;top:88px;width:58px;height:24px;background:#e6e6e6;border:1px solid #c6c6c6;border-bottom:none;border-radius:2px 2px 0 0;box-sizing:border-box"></div><div class="t" style="left:21px;top:93.80000000000001px;font-size:12.75px;">Setup</div><div style="position:absolute;left:67px;top:88px;width:86px;height:24px;background:#e6e6e6;border:1px solid #c6c6c6;border-bottom:none;border-radius:2px 2px 0 0;box-sizing:border-box"></div><div class="t" style="left:78.29999999999995px;top:93.80000000000001px;font-size:12.75px;">Calibration</div><div style="position:absolute;left:217px;top:88px;width:119px;height:24px;background:#e6e6e6;border:1px solid #c6c6c6;border-bottom:none;border-radius:2px 2px 0 0;box-sizing:border-box"></div><div class="t" style="left:228.70000000000005px;top:93.80000000000001px;font-size:12.75px;">Code Generation</div><div style="position:absolute;left:152px;top:86px;width:66px;height:28px;background:#fdfdfd;border:1px solid #c6c6c6;border-bottom:none;border-radius:2px 2px 0 0;box-sizing:border-box"></div><div class="t" style="left:163.5px;top:92.9px;font-size:12.3px;">Results</div><div style="position:absolute;left:10px;top:112px;width:660px;height:754px;background:#fff;border-left:1px solid #c0c0c0;border-top:1px solid #c0c0c0;border-right:1px solid #c0c0c0;box-sizing:border-box"></div><div style="position:absolute;left:153px;top:112px;width:64px;height:2px;background:#fdfdfd"></div><div style="position:absolute;left:18px;top:120px;width:17.5px;height:16.5px;background:linear-gradient(#f6f6f6,#e8e8e8);border:1px solid #bcbcbc;border-radius:2px;box-sizing:border-box"></div><svg style="position:absolute;left:21px;top:124px" width="12" height="8" viewBox="709 160 12 8"><path d="M710.2,166.2 L714.75,161.8 L719.3,166.2" fill="none" stroke="#2a2a2a" stroke-width="1.05"/></svg><div style="position:absolute;left:144px;top:127px;width:518px;height:1px;background:#a8a8a8"></div><div class="t" style="left:39.700000000000045px;top:122px;font-size:12.75px;background:#fff;padding-right:4px">Calibration Status</div><div class="t" style="left:17.899999999999977px;top:149.6px;font-size:12.75px;">Status</div><div style="position:absolute;left:84px;top:145px;width:578px;height:24px;background:#ededed;border:1px solid #c4c4c4;border-radius:3px;box-sizing:border-box"></div><div class="t" style="left:87px;top:149.6px;font-size:12.75px;">Calibration successful</div><div class="t" style="left:17.899999999999977px;top:177.6px;font-size:12.75px;">Mean Error</div><div style="position:absolute;left:84px;top:173px;width:451px;height:24px;background:#ededed;border:1px solid #c4c4c4;border-radius:3px;box-sizing:border-box"></div><div class="t" style="left:87px;top:177.6px;font-size:12.75px;">0.215642</div><div class="t" style="left:536.8px;top:177.6px;font-size:12.75px;">pixels</div><div style="position:absolute;left:18px;top:205px;width:17.5px;height:16.5px;background:linear-gradient(#f6f6f6,#e8e8e8);border:1px solid #bcbcbc;border-radius:2px;box-sizing:border-box"></div><svg style="position:absolute;left:21px;top:209px" width="12" height="8" viewBox="709 245 12 8"><path d="M710.2,251.2 L714.75,246.8 L719.3,251.2" fill="none" stroke="#2a2a2a" stroke-width="1.05"/></svg><div style="position:absolute;left:159px;top:212px;width:503px;height:1px;background:#a8a8a8"></div><div class="t" style="left:39.700000000000045px;top:207px;font-size:12.75px;background:#fff;padding-right:4px">Camera Parameters</div><div class="t" style="left:17.700000000000045px;top:235px;font-size:12.75px;">Cell Width (Sx)</div><div style="position:absolute;left:170px;top:230px;width:204px;height:24px;background:#ededed;border:1px solid #c4c4c4;border-radius:3px;box-sizing:border-box"></div><div class="t" style="left:172.5px;top:234.60000000000002px;font-size:12.75px;">3.11595</div><div class="t" style="left:375.5px;top:235px;font-size:12.75px;">&micro;m</div><div class="t" style="left:17.700000000000045px;top:263px;font-size:12.75px;">Cell Height (Sy)</div><div style="position:absolute;left:170px;top:258px;width:204px;height:24px;background:#ededed;border:1px solid #c4c4c4;border-radius:3px;box-sizing:border-box"></div><div class="t" style="left:172.5px;top:262.6px;font-size:12.75px;">3.1</div><div class="t" style="left:375.5px;top:263px;font-size:12.75px;">&micro;m</div><div class="t" style="left:17.700000000000045px;top:291px;font-size:12.75px;">Focal Length</div><div style="position:absolute;left:170px;top:286px;width:204px;height:24px;background:#ededed;border:1px solid #c4c4c4;border-radius:3px;box-sizing:border-box"></div><div class="t" style="left:172.5px;top:290.6px;font-size:12.75px;">6.08242</div><div class="t" style="left:375.5px;top:291px;font-size:12.75px;">mm</div><div class="t" style="left:17.700000000000045px;top:319px;font-size:12.75px;">Radial 2nd Order (K1)</div><div style="position:absolute;left:170px;top:314px;width:204px;height:24px;background:#ededed;border:1px solid #c4c4c4;border-radius:3px;box-sizing:border-box"></div><div class="t" style="left:172.5px;top:318.6px;font-size:12.75px;">12825.1</div><div class="t" style="left:375.5px;top:319px;font-size:12.75px;">1/m&sup2;</div><div class="t" style="left:17.700000000000045px;top:347px;font-size:12.75px;">Radial 4th Order (K2)</div><div style="position:absolute;left:170px;top:342px;width:204px;height:24px;background:#ededed;border:1px solid #c4c4c4;border-radius:3px;box-sizing:border-box"></div><div class="t" style="left:172.5px;top:346.6px;font-size:12.75px;">2.7578e+08</div><div class="t" style="left:375.5px;top:347px;font-size:12.75px;">1/m<sup>4</sup></div><div class="t" style="left:17.700000000000045px;top:375px;font-size:12.75px;">Radial 6th Order (K3)</div><div style="position:absolute;left:170px;top:370px;width:204px;height:24px;background:#ededed;border:1px solid #c4c4c4;border-radius:3px;box-sizing:border-box"></div><div class="t" style="left:172.5px;top:374.6px;font-size:12.75px;">7.19414e+12</div><div class="t" style="left:375.5px;top:375px;font-size:12.75px;">1/m<sup>6</sup></div><div class="t" style="left:17.700000000000045px;top:403px;font-size:12.75px;">Tangential 2nd Order (P1)</div><div style="position:absolute;left:170px;top:398px;width:204px;height:24px;background:#ededed;border:1px solid #c4c4c4;border-radius:3px;box-sizing:border-box"></div><div class="t" style="left:172.5px;top:402.6px;font-size:12.75px;">0.437256</div><div class="t" style="left:375.5px;top:403px;font-size:12.75px;">1/m&sup2;</div><div class="t" style="left:17.700000000000045px;top:431px;font-size:12.75px;">Tangential 2nd Order (P2)</div><div style="position:absolute;left:170px;top:426px;width:204px;height:24px;background:#ededed;border:1px solid #c4c4c4;border-radius:3px;box-sizing:border-box"></div><div class="t" style="left:172.5px;top:430.6px;font-size:12.75px;">0.0467439</div><div class="t" style="left:375.5px;top:431px;font-size:12.75px;">1/m&sup2;</div><div class="t" style="left:17.700000000000045px;top:459px;font-size:12.75px;">Center Column (Cx)</div><div style="position:absolute;left:170px;top:454px;width:204px;height:24px;background:#ededed;border:1px solid #c4c4c4;border-radius:3px;box-sizing:border-box"></div><div class="t" style="left:172.5px;top:458.6px;font-size:12.75px;">993.178</div><div class="t" style="left:375.5px;top:459px;font-size:12.75px;">pixels</div><div class="t" style="left:17.700000000000045px;top:487px;font-size:12.75px;">Center Row (Cy)</div><div style="position:absolute;left:170px;top:482px;width:204px;height:24px;background:#ededed;border:1px solid #c4c4c4;border-radius:3px;box-sizing:border-box"></div><div class="t" style="left:172.5px;top:486.6px;font-size:12.75px;">595.971</div><div class="t" style="left:375.5px;top:487px;font-size:12.75px;">pixels</div><div class="t" style="left:17.700000000000045px;top:515px;font-size:12.75px;">Image Width</div><div style="position:absolute;left:170px;top:510px;width:204px;height:24px;background:#ededed;border:1px solid #c4c4c4;border-radius:3px;box-sizing:border-box"></div><div class="t" style="left:172.5px;top:514.6px;font-size:12.75px;">1920</div><div class="t" style="left:375.5px;top:515px;font-size:12.75px;">pixels</div><div class="t" style="left:17.700000000000045px;top:543px;font-size:12.75px;">Image Height</div><div style="position:absolute;left:170px;top:538px;width:204px;height:24px;background:#ededed;border:1px solid #c4c4c4;border-radius:3px;box-sizing:border-box"></div><div class="t" style="left:172.5px;top:542.6px;font-size:12.75px;">1080</div><div class="t" style="left:375.5px;top:543px;font-size:12.75px;">pixels</div><div style="position:absolute;left:582px;top:230px;width:80px;height:24px;background:linear-gradient(#fafafa,#ececec);border:1px solid #bdbdbd;border-radius:3px;box-sizing:border-box"></div><div class="t" style="left:582px;top:235px;width:80px;text-align:center;font-size:12.75px">Save ...</div><div style="position:absolute;left:18px;top:570px;width:17.5px;height:16.5px;background:linear-gradient(#f6f6f6,#e8e8e8);border:1px solid #bcbcbc;border-radius:2px;box-sizing:border-box"></div><svg style="position:absolute;left:21px;top:574px" width="12" height="8" viewBox="709 610 12 8"><path d="M710.2,616.2 L714.75,611.8 L719.3,616.2" fill="none" stroke="#2a2a2a" stroke-width="1.05"/></svg><div style="position:absolute;left:120px;top:577px;width:542px;height:1px;background:#a8a8a8"></div><div class="t" style="left:39.700000000000045px;top:572px;font-size:12.75px;background:#fff;padding-right:4px">Camera Pose</div><div class="t" style="left:18.200000000000045px;top:600px;font-size:12.75px;">X</div><div style="position:absolute;left:28px;top:595px;width:182px;height:24px;background:#ededed;border:1px solid #c4c4c4;border-radius:3px;box-sizing:border-box"></div><div class="t" style="left:30.5px;top:599.6px;font-size:12.75px;">-24.5668</div><div class="t" style="left:213px;top:600px;font-size:12.75px;">mm</div><div class="t" style="left:267.70000000000005px;top:600px;font-size:12.75px;">Rotation X</div><div style="position:absolute;left:329px;top:595px;width:181px;height:24px;background:#ededed;border:1px solid #c4c4c4;border-radius:3px;box-sizing:border-box"></div><div class="t" style="left:331px;top:599.6px;font-size:12.75px;">341.39</div><div class="t" style="left:511.4000000000001px;top:600px;font-size:12.75px;">degrees</div><div class="t" style="left:18.200000000000045px;top:628px;font-size:12.75px;">Y</div><div style="position:absolute;left:28px;top:623px;width:182px;height:24px;background:#ededed;border:1px solid #c4c4c4;border-radius:3px;box-sizing:border-box"></div><div class="t" style="left:30.5px;top:627.6px;font-size:12.75px;">-50.2601</div><div class="t" style="left:213px;top:628px;font-size:12.75px;">mm</div><div class="t" style="left:267.70000000000005px;top:628px;font-size:12.75px;">Rotation Y</div><div style="position:absolute;left:329px;top:623px;width:181px;height:24px;background:#ededed;border:1px solid #c4c4c4;border-radius:3px;box-sizing:border-box"></div><div class="t" style="left:331px;top:627.6px;font-size:12.75px;">0.789249</div><div class="t" style="left:511.4000000000001px;top:628px;font-size:12.75px;">degrees</div><div class="t" style="left:18.200000000000045px;top:656px;font-size:12.75px;">Z</div><div style="position:absolute;left:28px;top:651px;width:182px;height:24px;background:#ededed;border:1px solid #c4c4c4;border-radius:3px;box-sizing:border-box"></div><div class="t" style="left:30.5px;top:655.6px;font-size:12.75px;">342.373</div><div class="t" style="left:213px;top:656px;font-size:12.75px;">mm</div><div class="t" style="left:267.70000000000005px;top:656px;font-size:12.75px;">Rotation Z</div><div style="position:absolute;left:329px;top:651px;width:181px;height:24px;background:#ededed;border:1px solid #c4c4c4;border-radius:3px;box-sizing:border-box"></div><div class="t" style="left:331px;top:655.6px;font-size:12.75px;">0.965407</div><div class="t" style="left:511.4000000000001px;top:656px;font-size:12.75px;">degrees</div><div style="position:absolute;left:582px;top:595px;width:80px;height:24px;background:linear-gradient(#fafafa,#ececec);border:1px solid #bdbdbd;border-radius:3px;box-sizing:border-box"></div><div class="t" style="left:582px;top:600px;width:80px;text-align:center;font-size:12.75px">Save ...</div><div style="position:absolute;left:18px;top:682px;width:14.5px;height:14.5px;background:#ebebeb;border:1px solid #a8a8a8;border-radius:2px;box-sizing:border-box"></div><div class="t" style="left:37px;top:682.6px;font-size:12.75px;">Origin at Image Corner</div><div style="position:absolute;left:18px;top:708px;width:17.5px;height:16.5px;background:linear-gradient(#f6f6f6,#e8e8e8);border:1px solid #bcbcbc;border-radius:2px;box-sizing:border-box"></div><svg style="position:absolute;left:21px;top:712px" width="12" height="8" viewBox="709 748 12 8"><path d="M710.2,754.2 L714.75,749.8 L719.3,754.2" fill="none" stroke="#2a2a2a" stroke-width="1.05"/></svg><div style="position:absolute;left:129px;top:715px;width:533px;height:1px;background:#a8a8a8"></div><div class="t" style="left:39.700000000000045px;top:710px;font-size:12.75px;background:#fff;padding-right:4px">Display Results</div><div style="position:absolute;left:18px;top:735.8px;width:14.5px;height:14.5px;background:#ebebeb;border:1px solid #a8a8a8;border-radius:50%;box-sizing:border-box"></div><div class="t" style="left:38px;top:736.6px;font-size:12.75px;">Original Reference Image</div><div style="position:absolute;left:341px;top:735.8px;width:14.5px;height:14.5px;background:#ebebeb;border:1px solid #a8a8a8;border-radius:2px;box-sizing:border-box"></div><svg style="position:absolute;left:341px;top:735px" width="16" height="16" viewBox="1029 771 16 16"><path d="M1031.6,778.6 L1035,783.6 L1041.2,773.8" fill="none" stroke="#161616" stroke-width="1.8"/></svg><div class="t" style="left:359.20000000000005px;top:736.6px;font-size:12.75px;">Display Coordinate Axes</div><div style="position:absolute;left:35px;top:758px;width:165px;height:21px;background:#fff6ee;border:1px solid #f0cfae;border-radius:2px;box-sizing:border-box"></div><div style="position:absolute;left:18px;top:760.8px;width:14.5px;height:14.5px;background:#ebebeb;border:1px solid #caa486;border-radius:50%;box-sizing:border-box"></div><div style="position:absolute;left:22.5px;top:765.3px;width:5.5px;height:5.5px;background:#202020;border-radius:50%"></div><div class="t" style="left:38px;top:761.6px;font-size:12.75px;">Simulated Reference Image</div></div>
</body></html>
